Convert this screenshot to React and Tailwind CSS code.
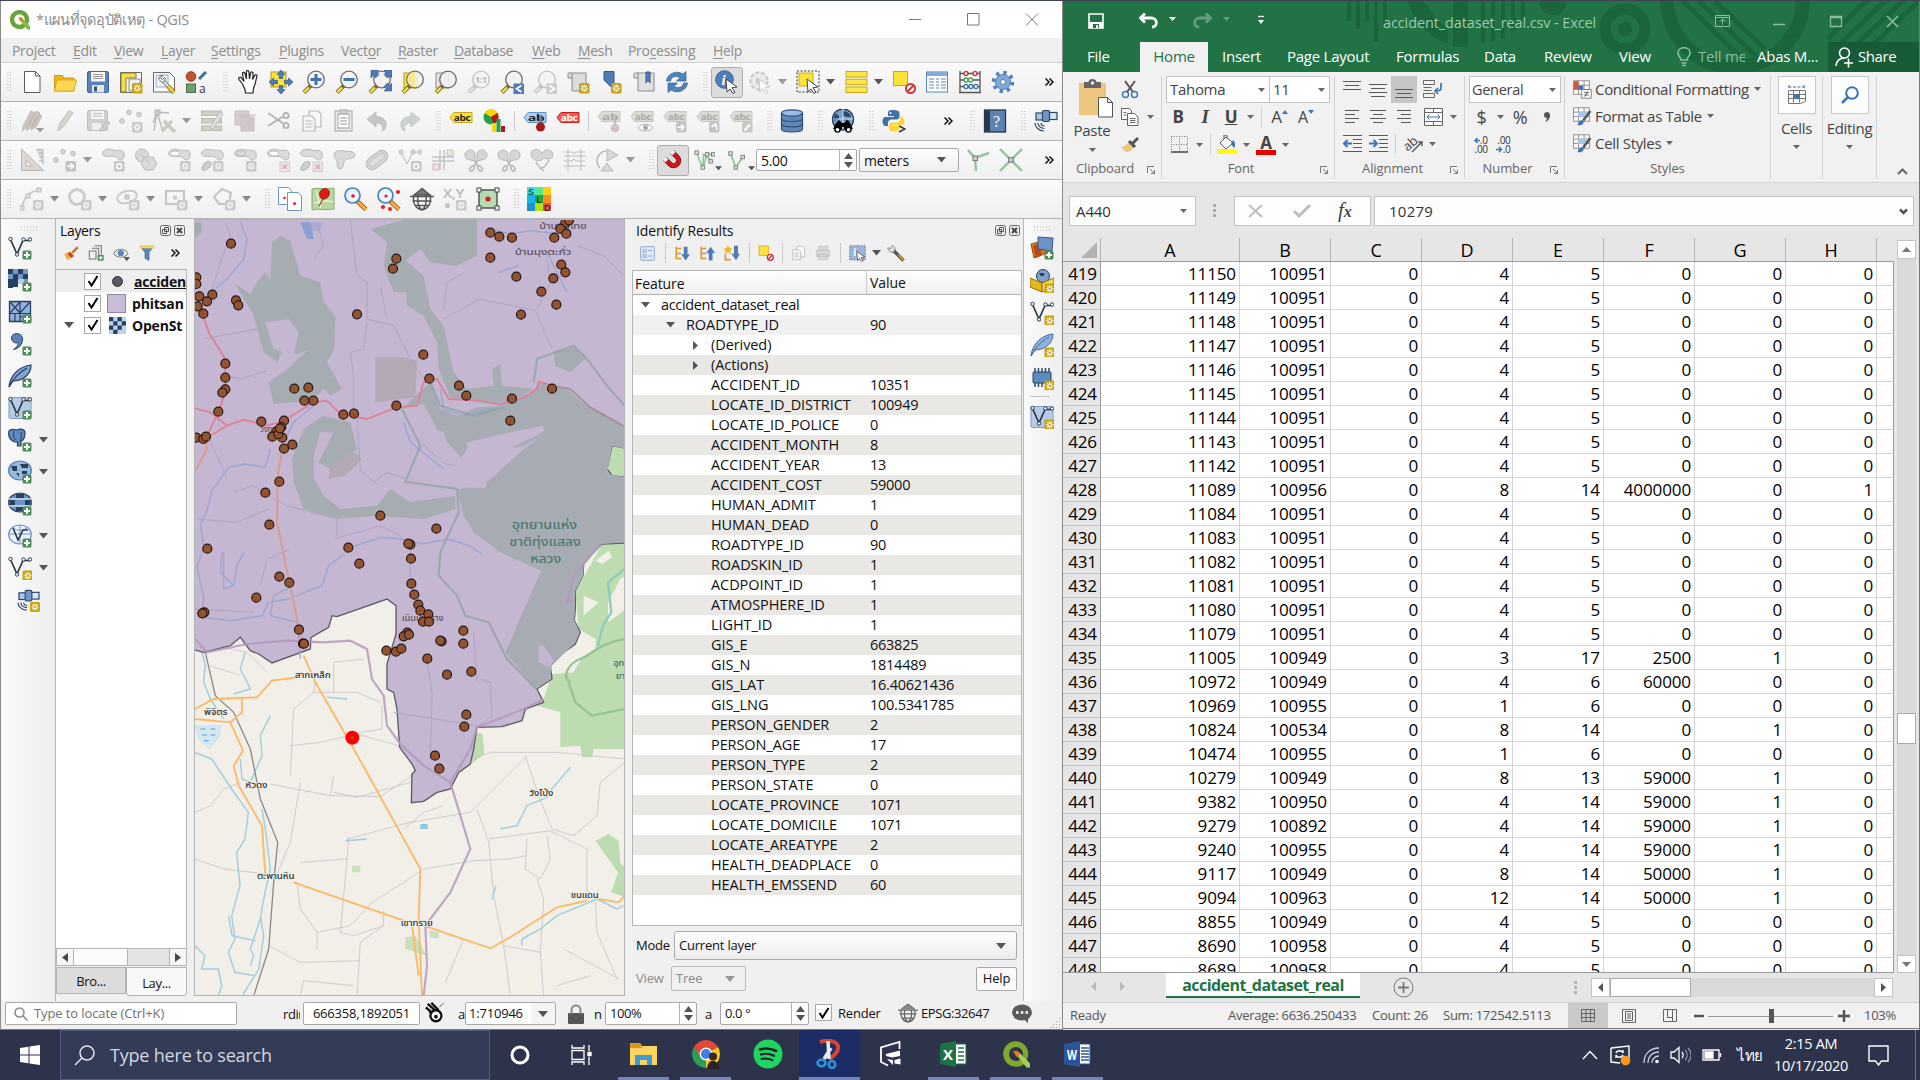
import React from "react";

/* ---------- shared drawing primitives (24x24 grid) ---------- */
const Ic = ({ children, s = 24, className = "" }) => (
  <svg width={s} height={s} viewBox="0 0 24 24" fill="none" className={"shrink-0 " + className}>{children}</svg>
);
const Star = ({ x = 13, y = 13, dim }) => (
  <g transform={`translate(${x} ${y})`}>
    <rect width="10.5" height="10.5" rx="1.5" fill={dim ? "#c9c9c5" : "#c8a40e"} />
    <path d="M5.2 1.6v7.4M1.6 5.2h7.4M2.6 2.6l5.2 5.2M7.8 2.6L2.6 7.8" stroke="#fff" strokeWidth="1.1" />
    <circle cx="5.2" cy="5.2" r="1.2" fill={dim ? "#c9c9c5" : "#c8a40e"} />
  </g>
);
const Plus = () => (
  <g transform="translate(14.5 14.5)">
    <rect width="9" height="9" rx="1.5" fill="#4d8d58" />
    <path d="M4.5 1.5v6M1.5 4.5h6" stroke="#fff" strokeWidth="2" />
  </g>
);
const Mag = ({ children, dim }) => (
  <g>
    <path d="M2 22.5l7-7" stroke={dim ? "#bdbdbd" : "#7a6a20"} strokeWidth="4" />
    <path d="M2.4 22.1l4.6-4.6" stroke={dim ? "#e2e2e2" : "#fbe04e"} strokeWidth="2.4" />
    <circle cx="14" cy="9.5" r="8.3" fill="#f2f2f2" fillOpacity=".85" stroke={dim ? "#bcbcbc" : "#6b6b6b"} strokeWidth="1.3" />
    {children}
  </g>
);
const Nodes = ({ c = "#27384d", k = "#fff" }) => (
  <g stroke={c} fill={k}>
    <path d="M2.5 3.5L9 18l6-13.5h7" fill="none" strokeWidth="1.7" />
    <circle cx="2.5" cy="3" r="1.7" /><circle cx="9" cy="18.5" r="1.7" /><circle cx="15.5" cy="3.5" r="1.7" /><circle cx="22" cy="3.5" r="1.7" />
  </g>
);
const Tag = ({ f, s, t, c = "#222" }) => (
  <g>
    <path d="M1 7.5L5 2.5h18v10H5z" fill={f} stroke={s} />
    <text x="4.8" y="10.8" fontSize="9.5" fontWeight="700" fill={c} fontFamily="Open Sans, sans-serif" textLength="16.5" lengthAdjust="spacingAndGlyphs">{t}</text>
  </g>
);
const Cur = ({ f = "#fff", s = "#444" }) => <path d="M11 9l11 8-5 .7 3 4.6-2.2 1.2-2.8-4.6-3 3.2z" fill={f} stroke={s} />;

const blob = "M1.5 6c-.5-4 6-6 11-4 4 1 9.500-1 10.500 3 .8 5-1 7-4 7-3-.5-2-3-6-3.500-5-.5-10 1-11.500-2.500z";

const G = {
  new: <path d="M4.5 1.5h11l4.5 4.5v16.5h-15.5zM15.5 1.5V6H20" fill="#fff" stroke="#5c5c5c" />,
  open: <g><path d="M1.5 21V5.5h8L11 8h10v13z" fill="#f0b51e" stroke="#cf9a1a" /><path d="M1.5 21L4 10h19.5l-3 11z" fill="#ffd84f" stroke="#d9a826" /></g>,
  save: <g><rect x="1.5" y="1.5" width="21" height="21" rx="1.5" fill="#5b82b8" stroke="#3f6699" /><rect x="5" y="2" width="14" height="9.5" fill="#f6f6f6" /><path d="M7 4.5h10M7 6.5h10M7 8.5h10" stroke="#9a9a9a" /><rect x="6" y="15" width="12" height="7.5" fill="#e6e6e6" /><rect x="8" y="16.5" width="3" height="5" fill="#34527d" /></g>,
  layout: <g><path d="M1.5 2.5h21v20h-21z" fill="#fff" stroke="#666" /><path d="M2 3h15v5H7v14H2z" fill="#f4dd52" stroke="#8a7a1c" /><path d="M10 9h11v12H10z" fill="#eee" stroke="#888" /><Star /></g>,
  layoutman: <g><path d="M1.5 2.5h16l5 5v14.5h-21z" fill="#fff" stroke="#666" /><path d="M4 5h12v12H4z" fill="#eef1f5" stroke="#9ab" /><path d="M11 11l5 5" stroke="#666" strokeWidth="3.5" /><path d="M11 11l5 5" stroke="#eee" strokeWidth="2" /><path d="M16 16l6 6.500" stroke="#8a6f1a" strokeWidth="4.500" /><path d="M16 16l6 6.500" stroke="#f3cf3f" strokeWidth="2.600" /><path d="M7 9.500l3 3c3 0 4-3 2.500-5l-2 2-1.800-1.800 2-2C8.500 5 6.500 7 7 9.500z" fill="#eee" stroke="#666" /></g>,
  style: <g><circle cx="6" cy="6.5" r="4.8" fill="#c7532d" stroke="#8f3a1d" /><path d="M14 9l7-7" stroke="#3b6ea5" strokeWidth="3" /><rect x="1.5" y="14" width="9" height="8.5" fill="#6da06f" stroke="#456f48" /><text x="14" y="23" fontSize="12" fill="#333" fontFamily="Open Sans, sans-serif">a</text></g>,
  hand: <path d="M6.500 14L3 9.500c-1-1.600 1-3 2.200-1.800L8 11.500 6.500 4c-.3-1.800 2-2.200 2.500-.500L10.500 9 10.300 2c0-1.800 2.500-1.800 2.600 0L13.500 9l1.100-6c.4-1.600 2.600-1.200 2.500.4L16.600 9.500l2-4c.8-1.400 2.700-.500 2.300 1-1.400 4-1 7.500-3.400 11.500l-.5 5H9.500l-.5-3.600z" fill="#fff" stroke="#222" strokeWidth="1.2" />,
  pan: <g><rect x="2" y="2" width="15" height="15" fill="#fbe33c" stroke="#b69c17" /><g fill="#4f7cb5" stroke="#34598c" strokeWidth=".7"><path d="M12 0l4 4.5h-2.3v4h-3.4v-4H8zM12 24l4-4.5h-2.3v-4h-3.4v4H8zM0 12l4.5-4v2.3h4v3.4h-4V16zM24 12l-4.5-4v2.3h-4v3.4h4V16z" /></g></g>,
  zin: <Mag><path d="M14 4v11M8.5 9.5h11" stroke="#3f73ad" strokeWidth="3" /></Mag>,
  zout: <Mag><path d="M8.5 9.5h11" stroke="#3f73ad" strokeWidth="3" /></Mag>,
  zfull: <g><Mag /><g fill="#4f7cb5" stroke="#34598c" strokeWidth=".6"><path d="M3 0h8L8.800 2.200 11 4.500 7.500 8 5.200 5.700 3 8zM24 0h-8l2.200 2.200L16 4.500 19.500 8l2.300-2.300L24 8zM24 21h-8l2.200-2.200L16 16.500l3.500-3.500 2.300 2.300L24 13z" /></g></g>,
  zsel: <g><rect x="3" y="3" width="13" height="15" fill="#fbe33c" stroke="#b69c17" /><Mag /><path d="M14 1.8v15.4a7.7 7.7 0 010-15.4z" fill="#f4e684" fillOpacity=".8" /></g>,
  zlay: <g><path d="M2 3h13v15H2z" fill="#e4e4e4" stroke="#8a8a8a" /><Mag /></g>,
  zone: <g opacity=".9"><Mag dim /><text x="8" y="13" fontSize="9" fontWeight="700" fill="#b5b5b5" fontFamily="Open Sans, sans-serif">1:1</text></g>,
  zlast: <g><Mag /><rect x="13.5" y="13.5" width="10.5" height="10.5" fill="#4f7cb5" /><path d="M21.5 15.5l-5 3.3 5 3.3" stroke="#fff" strokeWidth="1.8" /></g>,
  znext: <g opacity=".9"><Mag dim /><rect x="13.5" y="13.5" width="10.5" height="10.5" fill="#c9c9c9" /><path d="M16.5 15.5l5 3.3-5 3.3" stroke="#fff" strokeWidth="1.8" /></g>,
  mapnew: <g><path d="M5 3h15v18H6V8H2V4c0-1.500 2.500-1.500 3-1z" fill="#dcdcdc" stroke="#8a8a8a" /><path d="M6 8V3.500" stroke="#8a8a8a" /><Star /></g>,
  bmnew: <g><path d="M5 1.5h10V19l-4-3-6-6z" fill="#4f7cb5" stroke="#34598c" /><Star x="12" y="13" /></g>,
  bm: <g><path d="M5 3h17v18H6V8H2V4c0-1.500 2.500-1.500 3-1z" fill="#e0e0e0" stroke="#8a8a8a" /><path d="M6 8V3.500" stroke="#8a8a8a" /><path d="M14 2h4v11l-2-3-2 3z" fill="#4f7cb5" stroke="#34598c" /></g>,
  refresh: <g fill="#4f83bd" stroke="#34619a" strokeWidth=".7"><path d="M1.5 11C2 4 11-.5 18 4l3-2.5V11h-9.5L15 7.5C10.5 5 6 7 5.5 11z" /><path d="M22.5 13c-.5 7-9.5 11.5-16.5 7l-3 2.5V13h9.5L9 16.5c4.5 2.5 9 .5 9.5-3.5z" /></g>,
  ident: <g><circle cx="9.5" cy="9.5" r="8.8" fill="#4f7fba" stroke="#3a659b" /><text x="6.6" y="15" fontSize="15" fontWeight="700" fontStyle="italic" fill="#fff" fontFamily="Liberation Serif, serif">i</text><Cur /></g>,
  action: <g opacity=".7"><circle cx="11" cy="11" r="8.5" fill="#e8e8e8" stroke="#bbb" strokeWidth="2.5" strokeDasharray="4 2" /><path d="M8 7l7 4-7 4z" fill="#bbb" /><Cur s="#bbb" /></g>,
  select: <g><rect x="1" y="1" width="22" height="21" stroke="#333" strokeDasharray="2 1.6" /><rect x="3" y="3" width="14" height="13" fill="#fbe33c" stroke="#c9ae1c" /><Cur /></g>,
  selval: <g fill="#fde74a" stroke="#c9a51c"><rect x="2" y="1.5" width="21" height="5.5" /><rect x="2" y="9.2" width="21" height="5.5" /><rect x="2" y="17" width="21" height="5.5" /></g>,
  desel: <g><rect x="1.5" y="1.5" width="14" height="14" fill="#fbe33c" stroke="#c9a51c" /><circle cx="18.5" cy="18.5" r="4.500" fill="#fff" stroke="#d6313a" strokeWidth="2" /><path d="M15.500 21.500l6-6" stroke="#d6313a" strokeWidth="2" /></g>,
  table: <g><rect x="1.5" y="2" width="21" height="20" fill="#fff" stroke="#5b86ba" /><rect x="2" y="2" width="20" height="4" fill="#86abd8" /><path d="M4 9h5M4 12h5M4 15h5M4 18h5M11 9h3M11 12h3M11 15h3M11 18h3M16 9h5M16 12h5M16 15h5M16 18h5" stroke="#5b86ba" /></g>,
  abacus: <g><path d="M2 1v22M22 1v22M1 22.5h22M2 3.5h20M2 10h20M2 16.5h20" stroke="#555" strokeWidth="1.3" /><g fill="#fff" strokeWidth="1.3"><g stroke="#c9333a"><circle cx="8" cy="3.5" r="2" /><circle cx="17" cy="3.5" r="2" /></g><g stroke="#4aa355"><circle cx="8" cy="10" r="2" /><circle cx="12.5" cy="10" r="2" /></g><g stroke="#3f73ad"><circle cx="8" cy="16.5" r="2" /><circle cx="13" cy="16.5" r="2" /><circle cx="18" cy="16.5" r="2" /></g></g></g>,
  gear: <g><circle cx="12" cy="12" r="9.300" stroke="#4f83bd" strokeWidth="4" strokeDasharray="3.300 4" /><circle cx="12" cy="12" r="7.5" fill="#7fa8d8" stroke="#4f83bd" /><circle cx="12" cy="12" r="2.5" fill="#fff" stroke="#4f83bd" /></g>,

  pencils: <g fill="#ccc5be" stroke="#b5b0ab" strokeWidth=".7"><path d="M2 22l2-7L11 2l4 2-7 13zM6 22l3-7 7-13 4 2-7 13zM11 21l2-6 6-10 3 2-6 11z" /><path d="M16 19h8l-4 4.500z" fill="#999" stroke="none" /></g>,
  pencil: <path d="M5 22l1.5-7L16 1.5l4 2.5-9.5 13.5z" fill="#d7d7cf" stroke="#bcbcb8" />,
  dsave: <g><rect x="1.5" y="1.5" width="20" height="20" rx="1.5" fill="#cfcfcf" stroke="#bdbdbd" /><rect x="5" y="2" width="13" height="8" fill="#f4f4f4" /><path d="M7 4.5h9M7 7h9" stroke="#bbb" /><rect x="6" y="14" width="9" height="7" fill="#eee" /><path d="M13 22l8-10 3 2-8 8z" fill="#d6d0c8" stroke="#bbb" /></g>,
  dpts: <g><g fill="#d5d5d5" stroke="#bbb"><circle cx="3" cy="12" r="2.3" /><circle cx="10" cy="3.5" r="2.3" /><circle cx="20" cy="5.5" r="2.3" /></g><Star dim /></g>,
  dvert: <g stroke="#b8b8b8"><path d="M2 22L5 3l12 1M5 3l6 20M5 3L1 14" strokeWidth="1.3" /><rect x="3" y="1" width="5" height="5" fill="#ccc" /><path d="M10 22l10-10M12 12l11 11" stroke="#cbc9c2" strokeWidth="3.5" /></g>,
  dmulti: <g><rect x="1.5" y="2" width="20" height="4.5" fill="#cfcfc4" stroke="#bcbcb0" /><rect x="1.5" y="9.5" width="20" height="4.5" fill="#cfcfc4" stroke="#bcbcb0" /><rect x="1.5" y="17" width="20" height="4.5" fill="#cfcfc4" stroke="#bcbcb0" /><path d="M10 19L20 3l3 2-10 15z" fill="#e2e2e2" stroke="#bbb" /></g>,
  dtrash: <g fill="#d6cdcd" stroke="#c4bcbc"><path d="M2 2h14v14H2z" /><path d="M5 6h18M8 8h13v14H8zM12 10v10M15 10v10M18 10v10" fill="#d3c9c9" /></g>,
  dcut: <g stroke="#b6b2b2" strokeWidth="1.8"><path d="M2 4l16 11M2 17L18 7" /><circle cx="20" cy="6.5" r="2.6" /><circle cx="20" cy="16.5" r="2.6" /></g>,
  dcopy: <g fill="#f7f7f7" stroke="#b9b9b9" strokeWidth="1.2"><path d="M10 2h9l3 3v13H10z" /><path d="M4 7h9l3 3v12H4zM6.5 12h7M6.5 15h7M6.5 18h7" /></g>,
  dpaste: <g fill="#e9e9e9" stroke="#b9b9b9" strokeWidth="1.3"><path d="M3 2h17v20H3z" /><path d="M6 5h11v14H6zM8 9h7M8 12h7M8 15h7" fill="#fff" /><path d="M8 1h7v4H8z" fill="#ccc" /></g>,
  dundo: <path d="M2 10l9-7v4.5c8 0 11 5 10 10-.5 2.5-2 4-4 4.5 2-5-.5-8-6-8V18z" fill="#c9c5c2" stroke="#b8b4b1" strokeWidth=".7" />,
  dredo: <path d="M22 10l-9-7v4.5c-8 0-11 5-10 10 .5 2.5 2 4 4 4.5-2-5 .5-8 6-8V18z" fill="#ccd2d2" stroke="#b8bebe" strokeWidth=".7" />,
  abc: <g transform="translate(0 1)"><Tag f="#fbe33c" s="#c9a51c" t="abc" /></g>,
  diag: <g><circle cx="9" cy="8" r="7.5" fill="#1ba24b" /><path d="M9 8L2.5 4a7.5 7.5 0 0113 0z" fill="#fbd500" /><path d="M9 8l6.5-4a7.5 7.5 0 01-4 11z" fill="#b7161b" /><rect x="10" y="14" width="4" height="9" fill="#fbd500" /><rect x="14.5" y="10" width="4" height="13" fill="#1ba24b" /><rect x="19" y="17" width="4" height="6" fill="#b7161b" /></g>,
  abpin: <g><g transform="translate(0 1)"><Tag f="#a9d0f5" s="#5b93cf" t="ab" /></g><path d="M18 6v10" stroke="#777" strokeWidth="2.5" /><circle cx="17.5" cy="18" r="4.5" fill="#a51c1c" /></g>,
  abred: <g transform="translate(0 1)"><Tag f="#f8584e" s="#d11b1b" t="abc" c="#fff" /></g>,
  dab1: <g><Tag f="#dcdcd6" s="#c5c5c0" t="ab" c="#aaa" /><path d="M18 5v11" stroke="#bbb" strokeWidth="2" /><circle cx="18" cy="19" r="4.3" fill="#cfc1c1" /></g>,
  dab2: <g><Tag f="#dcdcd6" s="#c5c5c0" t="abc" c="#aaa" /><path d="M8 19c4-5 11-5 15 0-4 4-11 4-15 0z" fill="#fff" stroke="#aaa" /><circle cx="15.5" cy="18.5" r="2.5" fill="#aaa" /></g>,
  dab3: <g><Tag f="#dcdcd6" s="#c5c5c0" t="abc" c="#aaa" /><rect x="13" y="13" width="10.5" height="10.5" rx="1.5" fill="#c4c4c4" /><path d="M14.5 18.2h6M18 15.5l3 2.7-3 2.7" stroke="#fff" strokeWidth="1.6" /></g>,
  dab4: <g><Tag f="#dcdcd6" s="#c5c5c0" t="abc" c="#aaa" /><rect x="13" y="13" width="10.5" height="10.5" rx="1.5" fill="#c4c4c4" /><path d="M20.5 21c2-5-5-6-4.5-2.5M21 16l-3-1" stroke="#fff" strokeWidth="1.6" /></g>,
  dab5: <g><Tag f="#dcdcd6" s="#c5c5c0" t="abc" c="#aaa" /><rect x="13" y="13" width="10.5" height="10.5" rx="1.5" fill="#c9c9c4" /><path d="M15.5 21.5l5.5-6" stroke="#fff" strokeWidth="2.2" /></g>,
  db: <g fill="#5f87b8" stroke="#2f4f7a" strokeWidth="1.2"><path d="M1.5 4v16c0 4 21 4 21 0V4" /><ellipse cx="12" cy="4" rx="10.5" ry="3.2" fill="#9dbbe0" /><path d="M1.5 9.5c0 4 21 4 21 0M1.5 14.8c0 4 21 4 21 0" fill="none" /></g>,
  globebino: <g><circle cx="12" cy="10.5" r="10.5" fill="#7da1cd" stroke="#26425f" strokeWidth="1.3" /><path d="M4 5c4 0 5 3 3 5s-3 2-5 0M12 2c4 0 8 3 8 6-3 1-5-1-8-1z M13 11c3-1 6 0 6 2" fill="#2c4a6e" /><path d="M12 0v20M2 10h20" stroke="#dfeaf7" strokeWidth=".8" /><path d="M5 14l3-3 3 3h2l3-3 3 3 3 6h-9v-2h-2v2H2z" fill="#000" /><circle cx="6.5" cy="20.5" r="3.3" fill="#000" /><circle cx="17.5" cy="20.5" r="3.3" fill="#000" /><circle cx="6.5" cy="20.8" r="1.8" fill="#fff" /><circle cx="17.5" cy="20.8" r="1.8" fill="#fff" /></g>,
  python: <g><path d="M10.500 1c-4 0-4.5 1.5-4.5 3v3h6v1H3.500C1.5 8 .5 10 .5 12.500S2 17 3.500 17H6v-3c0-2 1.500-3.500 3.500-3.500h5c1.500 0 3-1.300 3-3V4c0-2-2-3-7-3z" fill="#3a74a8" /><path d="M12 22.500c4 0 5-1.500 5-3v-2.500h-6v-1h8.500c2 0 3-2 3-4.200 0-2.300-1.500-4-3-4H18v2.500c0 2-1.500 3.200-3.500 3.200h-5c-1.500 0-2.700 1.300-2.700 3v3c0 2 1.700 3 5.200 3z" fill="#ffd43f" /><circle cx="8.500" cy="4" r="1" fill="#fff" /><path d="M17 17l6 3-6 3" stroke="#333" strokeWidth="1.400" /></g>,
  book: <g><rect x="1.5" y="1" width="21" height="22" fill="#5b82b0" stroke="#26364d" strokeWidth="1.3" /><rect x="2" y="1.5" width="5" height="21" fill="#27374c" /><text x="10" y="18" fontSize="16" fill="#fff" fontFamily="Liberation Serif, serif">?</text></g>,
  sat: <g stroke="#2c4667" strokeWidth="1.2"><rect x="2" y="4" width="8" height="7" fill="#a9c7ea" /><rect x="14" y="3.5" width="9" height="7" fill="#d7e6f7" /><rect x="8.5" y="1.5" width="7" height="11" rx="1.5" fill="#6f96c4" /><path d="M1 14c0 4 4 8 9 8M4 14c0 3 3 5.5 6.5 5.5M7 14c0 2 1.500 3 3.500 3" /></g>,
  satstar: <g><g stroke="#2c4667" strokeWidth="1.2"><rect x="2" y="4" width="8" height="7" fill="#a9c7ea" /><rect x="14" y="3.5" width="9" height="7" fill="#d7e6f7" /><rect x="8.5" y="1.5" width="7" height="11" rx="1.5" fill="#6f96c4" /><path d="M1 14c0 4 4 8 9 8M4 14c0 3 3 5.5 6.5 5.5M7 14c0 2 1.500 3 3.500 3" /></g><Star x="13.5" y="13.5" /></g>,

  set: <g fill="#ddd8d4" stroke="#b9b5b0"><path d="M1.5 1v21.5h22zM6 12v6h6.5z" fillRule="evenodd" /><path d="M16 1.5h7v15M19 5h4M19 9h4M19 13h4" /></g>,
  mv: <g><g fill="#d5d5d5" stroke="#bbb"><circle cx="3" cy="12" r="2.3" /><circle cx="10" cy="3.5" r="2.3" /><circle cx="20" cy="5.5" r="2.3" /></g><rect x="12.5" y="13" width="10.5" height="10.5" rx="1.5" fill="#c2c2c2" /><path d="M14.5 18.2h5M17.5 15.5l3 2.7-3 2.7" stroke="#fff" strokeWidth="1.7" /></g>,
  b1: <g><path d={blob} fill="#dadada" stroke="#bababa" /><rect x="13" y="13" width="10.5" height="10.5" rx="1.5" fill="#c6c6c6" /><circle cx="18.2" cy="18.2" r="2.5" stroke="#fff" strokeWidth="1.5" /></g>,
  b2: <g fill="#dadada" stroke="#bababa"><circle cx="8" cy="7.5" r="6.5" /><path d="M11 9h8l4 6.5-4 6.5h-8l-4-6.5z" /><path d="M6 5l9 10" /></g>,
  b3: <g><path d={blob} fill="#dadada" stroke="#bababa" /><ellipse cx="8" cy="5.500" rx="4.500" ry="2.500" fill="#fff" stroke="#bababa" /><Star dim /></g>,
  b4: <g><path d={blob} fill="#dadada" stroke="#bababa" /><path d="M2 20c2-7 8-8 9-5s-4 8-9 7z" fill="#cfd0cc" stroke="#b0b0b0" /><Star dim /></g>,
  b5: <g><path d={blob} fill="#dadada" stroke="#bababa" /><ellipse cx="8" cy="5.500" rx="4.500" ry="2.500" stroke="#bababa" /><Star dim /></g>,
  b6: <g><path d={blob} fill="#dadada" stroke="#bababa" /><ellipse cx="8" cy="5.500" rx="4.500" ry="2.500" fill="#fff" stroke="#bababa" /><rect x="14" y="14" width="9.500" height="9.500" fill="#f0e3e3" stroke="#d5caca" /><path d="M16.5 16.5l4.5 4.5M21 16.5L16.5 21" stroke="#c9b5b5" strokeWidth="1.7" /></g>,
  b7: <g><path d={blob} fill="#dadada" stroke="#bababa" /><path d="M2 20c2-7 8-8 9-5s-4 8-9 7z" fill="#cfd0cc" stroke="#b0b0b0" /><rect x="14" y="14" width="9.500" height="9.500" fill="#f0e3e3" stroke="#d5caca" /><path d="M16.5 16.5l4.5 4.5M21 16.5L16.5 21" stroke="#c9b5b5" strokeWidth="1.7" /></g>,
  b8: <path d="M2 8C2 2 8 2 12 3s10-1 11 4c0 5-8 2-11 6 0 4-2 9-5 8-3-2 0-7-5-13z" fill="#d9d9d9" stroke="#b9b9b9" />,
  b9: <g transform="rotate(-38 12 12)"><rect x="0" y="6" width="24" height="12" rx="6" fill="#d6d6d2" stroke="#b9b9b5" /><rect x="3" y="9" width="18" height="6" rx="3" fill="#dedede" stroke="#c6c6c6" /></g>,
  b10: <g><g stroke="#b9b9b9" fill="#ddd"><path d="M3 4l6 12 6-12h7" fill="none" /><circle cx="3" cy="4" r="2" /><circle cx="15" cy="4" r="2" /><circle cx="22" cy="4" r="2" /></g><rect x="13" y="13" width="10.5" height="10.5" rx="1.5" fill="#c6c6c6" /><circle cx="18.2" cy="18.2" r="2.5" stroke="#fff" strokeWidth="1.5" /></g>,
  b11: <g stroke="#c4c4c4"><path d="M9 2v20M13 2v20M1 9h22M1 13h22" strokeWidth="1.5" /><rect x="2" y="16" width="6" height="6" fill="#eedede" /><rect x="16" y="2" width="6" height="6" fill="#e8e8d8" /></g>,
  b12: <g fill="#d6d6d6" stroke="#b9b9b9"><path d="M1 7c0-6 9-7 10-1l0 7-4-1c-4 0-6-2-6-5zM23 7c0-6-9-7-10-1l0 7 4-1c4 0 6-2 6-5z" /><path d="M10 12l4.500 7M14 12l-4.500 7" strokeWidth="1.5" /><ellipse cx="8" cy="20.500" rx="1.800" ry="2.800" fill="none" strokeWidth="1.500" transform="rotate(35 8 20.500)" /><ellipse cx="16" cy="20.500" rx="1.800" ry="2.800" fill="none" strokeWidth="1.500" transform="rotate(-35 16 20.500)" /></g>,
  b14: <g fill="#d6d6d6" stroke="#b9b9b9"><path d="M1 6c0-6 10-6 11 0 1-6 11-5 11 1 0 4-6 5-9 3-3 5-13 3-13-4z" /><path d="M6 14c4 8 8 8 13-2M10 20l4 3" fill="none" strokeWidth="1.5" /></g>,
  b16: <g stroke="#bdbdbd"><path d="M1 4h8l2 2 2-2h9M1 8h22M1 13h8l2-2 2 2h9M1 18h22M5 1v22M18 1v22" /></g>,
  b17: <g fill="#d8d8d8" stroke="#b9b9b9"><path d="M10 3A10 10 0 004 20" fill="none" strokeWidth="1.5" /><path d="M11 1v12l11-6zM11 15l-6 8h12z" /></g>,
  magnet: <g transform="rotate(-45 12 12)" fill="none"><path d="M6 4v9c0 8 12 8 12 0V4" stroke="#8a0d10" strokeWidth="6" /><path d="M6 5v8c0 8 12 8 12 0V5" stroke="#d0181c" strokeWidth="4.600" /><path d="M6 3.500v4M18 3.500v4" stroke="#f4f4f4" strokeWidth="5" /></g>,
  snap1: <g><path d="M3 3l7 18 5-16h7M10 21l1-16 10 8" stroke="#8fc59a" strokeWidth="1.8" /><g fill="#ddd" stroke="#7a7a7a"><rect x="1" y="1" width="4" height="4" /><rect x="13" y="3" width="4" height="4" /><rect x="20" y="3" width="4" height="4" /><rect x="8" y="18" width="4" height="4" /><rect x="17" y="11" width="4" height="4" /></g></g>,
  snap2: <g><path d="M4 4l6 16 8-12" stroke="#8fc59a" strokeWidth="2.2" /><g fill="#ddd" stroke="#7a7a7a"><rect x="2" y="2" width="4" height="4" /><rect x="8" y="18" width="4" height="4" /><rect x="16" y="6" width="4" height="4" /></g></g>,
  topo: <g><path d="M2 2l7 8 14-5M9 10l1 13" stroke="#8fc59a" strokeWidth="2.4" /><rect x="7" y="8" width="4.5" height="4.5" fill="#ccc" stroke="#777" /></g>,
  inter: <g><path d="M1 1l22 22M23 1L1 23" stroke="#8fc59a" strokeWidth="2.4" /><rect x="9.7" y="9.7" width="4.5" height="4.5" fill="#ccc" stroke="#777" /></g>,

  c1: <g><path d="M2 21C4 10 8 5 19 3" stroke="#c6c6c6" strokeWidth="1.6" /><g fill="#e3e3e3" stroke="#b9b9b9"><rect x="0" y="19" width="4" height="4" /><rect x="6" y="7" width="4" height="4" /><rect x="17" y="1" width="4" height="4" /></g><Star dim /></g>,
  c2: <g><circle cx="9" cy="10" r="7.5" stroke="#ccc" strokeWidth="3" /><Star dim /></g>,
  c3: <g><ellipse cx="11" cy="10" rx="10" ry="6" stroke="#ccc" strokeWidth="2" transform="rotate(-15 11 10)" /><circle cx="11" cy="10" r="3" fill="#ccc" /><Star dim /></g>,
  c4: <g><rect x="2" y="4" width="18" height="13" stroke="#c6c6c6" strokeWidth="2.2" /><circle cx="11" cy="10.5" r="2.2" fill="#ccc" /><Star dim /></g>,
  c5: <g><path d="M10 2l9 4-2 11H7L2 10z" stroke="#c6c6c6" strokeWidth="2.2" /><Star dim /></g>,
  pages: <g fill="#fff" stroke="#6f96bd"><path d="M.5 .500h10l3 3v14h-13z" /><path d="M9.5 5.500h10.500l3.500 3.500v14.500h-14z" /><circle cx="6.500" cy="11" r="1.3" fill="#e02020" stroke="none" /><circle cx="16.500" cy="16.500" r="1.5" fill="#e02020" stroke="none" /></g>,
  pinmap: <g><path d="M1 2c6-2 14 1 22-1v21c-8 2-14-1-22 1z" fill="#b8d8a0" stroke="#8cab74" /><path d="M3 16c4 0 8-4 19-1M5 4l5 17" stroke="#fff" /><path d="M9 5c2-5 11-4 9 2 0 3-3 5-6 5-3-1-4-4-3-7zM12 12l-4 7" fill="#e01b1b" stroke="#a80f0f" /></g>,
  zred: <g><path d="M13 14l9 8.5" stroke="#b46a15" strokeWidth="4.5" /><path d="M14 15l8 7.5" stroke="#f7ae45" strokeWidth="2.5" /><circle cx="8.5" cy="8.5" r="7.5" fill="#e8f3fd" stroke="#4c82bd" strokeWidth="1.7" /><circle cx="9" cy="9" r="1.8" fill="#e02020" /></g>,
  zred2: <g><path d="M13 14l9 8.5" stroke="#b46a15" strokeWidth="4.5" /><path d="M14 15l8 7.5" stroke="#f7ae45" strokeWidth="2.5" /><circle cx="8.5" cy="8.5" r="7.5" fill="#e8f3fd" stroke="#4c82bd" strokeWidth="1.7" /><g fill="#e02020"><circle cx="9" cy="9" r="1.6" /><circle cx="21" cy="5" r="2" /><circle cx="6" cy="20" r="2" /><circle cx="13" cy="22" r="2" /></g></g>,
  mesh: <g stroke="#555" strokeWidth="1.400"><path d="M12 1.500L4 8h16z" fill="#777" /><path d="M0 9.500h24M2.500 14h19M5 18.500h14M4 8c-2 8 2 14 8 15 6-1 10-7 8-15M8 8c-1 8 1 13 4 15 3-2 5-7 4-15" /></g>,
  xy: <g><text x="0" y="10.5" fontSize="12" fontWeight="700" fill="#c0c0c0" fontFamily="Open Sans, sans-serif" textLength="21" lengthAdjust="spacingAndGlyphs">X,Y</text><circle cx="4.5" cy="18.5" r="2.6" fill="#c6c6c6" /><Star dim /></g>,
  bbox: <g><rect x="3" y="3" width="18" height="18" fill="#b5dcae" stroke="#555" strokeWidth="1.5" /><g fill="#fff" stroke="#444"><rect x="1" y="1" width="4" height="4" /><rect x="19" y="1" width="4" height="4" /><rect x="1" y="19" width="4" height="4" /><rect x="19" y="19" width="4" height="4" /></g><circle cx="12" cy="12" r="2.6" fill="#e01b1b" /></g>,
  sld: <g><path d="M0 0h8v8H0z" fill="#35e0e6" /><path d="M8 0h8v8H8z" fill="#58e88b" /><path d="M16 0h8v8h-8z" fill="#ffd012" /><path d="M0 8h8v8H0z" fill="#12b9ef" /><path d="M8 8h8v8H8z" fill="#21ab3b" /><path d="M16 8h8v8h-8z" fill="#ff8a1e" /><path d="M0 16h8v8H0z" fill="#2391cf" /><path d="M8 16h8v8H8z" fill="#b5e01c" /><path d="M16 16h8v8h-8z" fill="#e0555c" /><g fontSize="9" fill="#111" fontFamily="Liberation Sans, sans-serif"><text x="1" y="7.5">S</text><text x="9.5" y="15.5">L</text><text x="17" y="23.5">D</text></g></g>,

  vec: <g><Nodes /><Plus /></g>,
  vecs: <g><Nodes /><Star x="14.500" y="14.500" /></g>,
  ras: <g><path d="M0 1h20v15H0z" fill="#7399cb" /><path d="M0 1h5v5H0zM10 1h5v5h-5zM5 6h5v5H5zM0 11h5v5H0zM15 6h5v5h-5z" fill="#27405f" /><path d="M5 11h5v8H5zM0 16h5v4H0z" fill="#27405f" /><path d="M10 11h6v5h-6z" fill="#b5cdea" /><Plus /></g>,
  meshl: <g><path d="M1.5 1.5h21v20h-21z" fill="#8fb1dc" stroke="#27405f" strokeWidth="1.3" /><path d="M1.5 13.5h21M12 1.5v20M2 13L12 2M2 2l10 11M12 13L22 2M7 13.5v8M12 17h10" stroke="#27405f" strokeWidth="1.2" /><Plus /></g>,
  comma: <g><path d="M3.5 6c0-6 11-6 11 1 0 6-4 9.5-9 10.5 3-2 5-4.5 4.5-7-3 1.5-6.5-1-6.5-4.5z" fill="#5b84b8" stroke="#27405f" /><Plus /></g>,
  quill: <g><path d="M1 23C2 11 12 2 23 1c0 10-9 16-18 16z" fill="#7fa4d2" stroke="#27405f" strokeWidth="1.2" /><path d="M1 23C6 13 12 8 19 4" stroke="#27405f" strokeWidth="1.2" /><Plus /></g>,
  quills: <g><path d="M1 23C2 11 12 2 23 1c0 10-9 16-18 16z" fill="#8eb2dd" stroke="#3f6a9a" /><path d="M1 23C6 13 12 8 19 4" stroke="#3f6a9a" /><Star x="14.5" y="14.5" /></g>,
  virt: <g><rect x="1" y="1.5" width="22" height="21" rx="1.5" fill="#b5cbe6" stroke="#7f9cbf" /><Nodes /><Plus /></g>,
  virts: <g><rect x="1" y="1.5" width="22" height="21" rx="1.5" fill="#b5cbe6" stroke="#7f9cbf" /><Nodes /><Star x="14.5" y="14.5" /></g>,
  pg: <g><path d="M1 3c2-3 6-1 8-1 3-1.5 8-1 8 3 0 5-2 8-4 8v5H9.5v-4H7C1 12 0 7 1 3z" fill="#5f8abf" stroke="#27405f" strokeWidth="1.2" /><path d="M6 3c-1 5 0 8 2 9M13 4c1 4 0 7-1 9" stroke="#27405f" /><Plus /></g>,
  glob1: <g><ellipse cx="12" cy="10.5" rx="11.3" ry="9.5" fill="#9bb9dd" stroke="#4f7cb5" strokeWidth="1.2" /><path d="M3 6h6v5H5zM12 4h8v4h-6zM14 11h5v3h-5zM8 13h3v4z" fill="#27405f" /><Plus /></g>,
  glob2: <g><ellipse cx="12" cy="10.5" rx="11.3" ry="9.5" fill="#6b93c5" stroke="#27405f" strokeWidth="1.2" /><path d="M1 7h22M1 14h22" stroke="#fff" strokeWidth="1.2" /><path d="M2 8h5v5H2zM17 8h5v5h-5zM8 2h8v4H8zM8 15h7v4H8z" fill="#27405f" /><Plus /></g>,
  glob3: <g><ellipse cx="12" cy="10.5" rx="11.3" ry="9.5" fill="#edf4fc" stroke="#6b93c5" strokeWidth="1.2" /><path d="M1 10h22M12 1v19M5 4c4 3 10 3 14 0" stroke="#6b93c5" /><path d="M5 4l5 12 5-10h5" stroke="#27384d" strokeWidth="1.6" /><Plus /></g>,
  cards: <g><path d="M1 8l12-3 4 12-13 5z" fill="#d87b1f" stroke="#9a4f0f" /><path d="M3 10l6-3 3 12-6 3z" fill="#b8481c" /><path d="M8 1l15 1-1 13-14-2z" fill="#6b93c5" stroke="#34598c" /><Plus /></g>,
  box: <g><circle cx="13" cy="7" r="6.5" fill="#7da1cd" stroke="#27405f" /><path d="M9 4h5v3h-3z" fill="#27405f" /><path d="M0 9l12 5v9L0 18z" fill="#e5b818" stroke="#8c6f0b" /><path d="M12 14l12-5v9l-12 5z" fill="#f8da45" stroke="#8c6f0b" /><Star x="14.5" y="14.5" /></g>,
  chip: <g><rect x="3" y="6" width="18" height="11" rx="1" fill="#5f8abf" stroke="#27405f" /><path d="M5 2v4M8.5 2v4M12 2v4M15.5 2v4M19 2v4M5 17v4M8.5 17v4M12 17v4" stroke="#27405f" strokeWidth="1.4" /><Star x="14.5" y="14.5" /></g>,
};
const I = ({ n, s, className }) => <Ic s={s} className={className}>{G[n]}</Ic>;

/* ---------- QGIS toolbar pieces ---------- */
const Slot = ({ n }) => <div className="flex w-[33px] shrink-0 justify-center"><I n={n} /></div>;
const Grip = () => (
  <div className="flex w-[18px] shrink-0 justify-center pl-1.5">
    <svg width="5" height="20" className="shrink-0"><path d="M1 0v20M4 0v20" stroke="#b5b5b5" strokeDasharray="1 2" /></svg>
  </div>
);
const Tri = ({ c = "#555", w = 10 }) => (
  <svg width={w} height={w / 2 + 1} viewBox="0 0 10 6" className="shrink-0"><path d="M0 0h10L5 6z" fill={c} /></svg>
);
const DD = ({ c }) => <div className="flex w-[15px] shrink-0 justify-center pr-[2px]"><Tri c={c} w={9} /></div>;
const VSep = ({ className = "w-2" }) => <div className={"flex h-5 shrink-0 justify-center " + className}><div className="w-px bg-[#c9c9c9]" /></div>;
const More = () => (
  <svg width="9" height="8" className="shrink-0" fill="none" stroke="#111" strokeWidth="1.500"><path d="M.5 .500L4 4 .5 7.500M4.500 .500L8 4 4.500 7.500" /></svg>
);
const Bar = ({ children }) => (
  <div className="flex h-[39px] shrink-0 items-center border-b border-[#b4b4b4] bg-gradient-to-b from-[#fafafa] to-[#efefef]">
    <div className="w-[14px] shrink-0 pl-[5px]"><svg width="5" height="20"><path d="M2 0v20M4.5 0v20" stroke="#b5b5b5" strokeDasharray="1 2" /></svg></div>
    {children}
  </div>
);
const Spin = () => (
  <div className="flex h-full w-[17px] shrink-0 flex-col items-center justify-center gap-[3px] border-l border-[#b4b4b4]">
    <svg width="9" height="6"><path d="M0 6h9L4.5 0z" fill="#555" /></svg>
    <svg width="9" height="6"><path d="M0 0h9L4.5 6z" fill="#555" /></svg>
  </div>
);

const MENU = [
  ["Pro", "j", "ect", "w-[61px]"], ["", "E", "dit", "w-[41px]"], ["", "V", "iew", "w-[47px]"], ["", "L", "ayer", "w-[50px]"],
  ["", "S", "ettings", "w-[68px]"], ["", "P", "lugins", "w-[62px]"], ["Vect", "o", "r", "w-[57px]"], ["", "R", "aster", "w-[56px]"],
  ["", "D", "atabase", "w-[78px]"], ["", "W", "eb", "w-[46px]"], ["", "M", "esh", "w-[50px]"], ["Pro", "c", "essing", "w-[85px]"], ["", "H", "elp", "w-[50px]"],
];

/* ---------- map ---------- */
const DOTS = [[122,84],[18,185],[18,205],[27,242],[66,237],[50,257],[22,272],[39,294],[137,254],[144,269],[618,129],[608,159],[500,296],[900,51],[927,63],[965,66],[900,126],[978,183],[1113,147],[1125,170],[1089,188],[1053,228],[1098,267],[992,297],[1125,22],[1110,39],[1128,54],[1092,66],[1136,14],[699,417],[717,489],[806,510],[828,540],[965,549],[960,615],[1085,519],[618,570],[459,597],[491,594],[312,519],[354,516],[342,555],[369,555],[105,444],[105,486],[105,521],[96,531],[84,588],[213,618],[281,615],[273,634],[258,648],[246,663],[276,666],[264,655],[269,638],[306,687],[281,699],[18,666],[39,670],[47,663],[267,798],[225,831],[237,927],[51,999],[267,1083],[297,1101],[198,1146],[42,1190],[36,1193],[570,900],[738,939],[474,996],[507,1044],[660,987],[654,984],[662,1029],[663,1104],[672,1137],[684,1167],[690,1185],[714,1196],[326,1242],[338,1284],[341,1284],[698,1218],[716,1218],[651,1251],[640,1262],[656,1257],[588,1305],[617,1308],[633,1299],[711,1329],[754,1277],[750,1275],[819,1245],[819,1284],[770,1377],[843,1368],[828,1497],[822,1533],[734,1620],[747,1659]];
const PURPLE = "M0 0H1320V700L1265 690 1250 760 1265 780 1303 785V982L1235 985 1210 1010 1180 1045 1178 1080 1155 1125 1155 1180 1152 1215 1170 1250 1155 1285 1120 1310 1080 1350 1085 1390 1040 1420 1060 1460 1005 1480 995 1515 935 1533 860 1535 850 1600 840 1645 805 1670 780 1720 740 1730 700 1757 663 1761 665 1675 675 1665 665 1645 628 1595 620 1480 610 1430 590 1420 590 1345 617 1255 617 1170 590 1150 440 1203 425 1200 415 1235 362 1265 360 1300 245 1342 205 1315 180 1305 150 1265 120 1290 40 1310 0 1300z";

const MapCanvas = () => (
  <svg width="431" height="776" viewBox="14 13 1293 2328" className="block">
    <rect x="0" y="0" width="1400" height="2400" fill="#f2efe9" />
    <g fill="#bddcb0">
      <path d="M1265 690L1307 700V785L1250 775zM1235 985L1307 980V1600L1210 1600 1205 1625 1175 1625 1170 1590 1110 1595V1490L1040 1470 1060 1450 1085 1375 1150 1370 1190 1300 1215 1305V1270L1165 1240 1155 1130z" />
      <path d="M857 1550l20 5 5 60-40 30zM1215 1875l40-20 30 20 5 70 17 10v90l-44-15 20-60z" /><path d="M645 2165l30-5 35 60-65-20zM715 2145l30 5v20l-25-5zM485 1950h25v20h-25z" opacity=".8" />
    </g>
    <g fill="#f2efe9"><path d="M1160 1250l55 20v30l-30 20-50 30-50 20-2-20 47-50zM1180 1140l45 20-45 40zM1290 1090l17-10v100l-54 40v-60zM1215 1035l40-30 10 20-30 20z" /></g>
    <g fill="none" stroke="#c9c3c9" strokeWidth="2.5">
      <path d="M14 1790L60 1770 100 1720 150 1700M14 1930L100 1960 230 1975M300 1680L310 1480 370 1430 375 1390M370 1430L500 1430 570 1460M430 1730L500 1745 660 1700M240 1705L420 1740 570 1743 650 1690 780 1590M470 1870L660 1820 840 1790 1010 1620M300 1590L390 1580 500 1555 625 1590M330 1940L470 1930 475 1865M250 2000L300 1880 330 1700M320 2000L330 2080 380 2150 480 2130 545 2060 640 2000 700 1960 850 1935 960 1930 1005 1920M470 1930L450 2150 490 2160 580 2130V2085M235 2190L330 2240 510 2235M500 2341L510 2180 580 2130M330 2341L340 2295 490 2310M380 2150V2200M860 1780L895 1880 910 2040 940 2190 1050 2210 1060 2341M895 1870L1080 1845 1190 1900V2040M1005 1620L1045 1740 1085 1840 1150 1860 1220 1800 1230 1700 1303 1640M1010 1870L1005 1960 1050 1990 1080 1930 1070 1860M1050 2210L1060 2050 1040 1990M1120 2200L1250 2270 1285 2290M1215 2060L1220 2150 1280 2290M765 2300L820 2170M940 2190L960 2341M1100 2310L1200 2280M430 1430L430 1340 520 1330M510 1550L575 1540 575 1470M800 1650L900 1610 1100 1610 1303 1630M70 1290l100 20 60 60M60 1350l90 30M420 1740l10-60M640 1840l60-50 60-20M660 1700l20-60" />
    </g>
    <g fill="none" stroke="#9fd0de" strokeWidth="4.5" strokeLinejoin="round">
      <path d="M35 1310l10 40-5 50 20 50 40 60M165 1310l-15 50 30 60-50 15M14 1610l50 20 60 90 50 70-10 80-25 40 10 100-25 90 10 70-20 40 20 60 60 10M215 1780l10 60 15 120-20 90-10 60-30 90 10 20-10 30M240 1500l-30 60 5 60-35 80-25-10-5-60M14 2190l30 30-10 40 50 0 10 50-10 31M155 2341l50-80 15-100-10-60M1140 1655l-60 70-10 20-60 25-30 60-50 10M1300 2070l-20 10-60-30-120 50-50 40-55 30v20M410 1445l60 5M465 1875l65-5M905 2050l12-40M115 2100l10 60 70 15" />
      <path d="M1303 1060l-50 40 10 90-25 40-15 60" stroke="#88cfc0" strokeWidth="7" />
    </g>
    <path d="M14 1530h78l-5 30-30 40-30-30z" fill="#d5e8f2" stroke="#a4cde0" />
    <path d="M30 1540h15M60 1540h15M35 1558h15M60 1558h15M40 1575h15" stroke="#4d9fe0" strokeWidth="3" />
    <path d="M690 1825h22v15h-22z" fill="#8ec8dc" />
    <path d="M45 1310L75 1440 130 1490 180 1600 210 1750 262 1880 250 2000 235 2200 190 2341" fill="none" stroke="#8c8c8c" strokeWidth="4" />
    <path d="M340 1320L375 1400 485 1590 690 1960 685 2110 695 2341M14 1480L70 1450 200 1445 245 1395 320 1385M14 1510L120 1520 155 1490V1450M120 1520L158 1605 130 1650 145 1710 215 1830 225 1980M310 2000L640 2115M700 2130L900 2198 960 2165 1100 2075 1190 2055M1225 2050L1285 2060 1303 2040M665 2130L685 2280" fill="none" stroke="#fbb964" strokeWidth="5.5" />
    <path d="M1140 1400c-30-20 0-60 30-70s60-50 133-60M1135 1400l20 60 50 40 98-20" fill="none" stroke="#93c58c" strokeWidth="7" />

    <path d={PURPLE} fill="#c5b6d2" stroke="#5f5a66" strokeWidth="4" />
    <g fill="#a7acb4">
      <path d="M635 580L700 565 740 640 690 650 700 690 760 745 800 752 830 700 860 672 900 700 950 700 1000 690 1000 690 1052 660 1052 660 1000 700 890 800 800 822 820 900 850 950 930 1010 1052 1065 945 1310 1038 1420 1080 1390 1083 1350 1125 1310 1155 1280 1168 1250 1152 1215 1155 1125 1178 1080 1180 1045 1235 985 1307 980V785L1250 775 1265 690 1307 700V635L1190 570 1130 520 1045 500 1030 525 940 570 860 575 800 600 750 580 720 500z" />
    </g>
    <g fill="#a6adb2">
      <path d="M225 170L240 195 245 80 270 60 300 75 330 180 390 200 400 260 435 300 432 400 410 440 455 520 420 540 400 520 360 555 250 565 235 500 290 460 350 405 320 415 280 400 260 440 220 410 190 300 135 205 180 235 200 200z" />
      <path d="M540 40L640 13H860V120L800 150 720 140 690 100 650 130 650 230 610 230 580 150 590 80zM640 130L700 180 720 280 760 330 790 470 830 520 910 510 905 460 930 445 935 510 1030 520 940 570 860 560 780 545 745 460 740 380 700 300 650 270z" />
      <path d="M340 640L400 600 480 620 500 700 420 760 385 740 430 650 390 650 370 720 370 790 400 840 450 880 560 870 600 820 660 860 795 840 795 880 700 910 560 900 440 910 340 880 310 800 305 730z" />
      <path d="M1090 410l60-15 40 30-50 45-45-20zM14 20h20v30l-20 20z" />
    </g>
    <path d="M555 425l85 0 40 10-5 110-120 15z" fill="#b3a9b5" /><path d="M420 750l70-40 25 20-50 50-50 10z" fill="#b3a9b5" />
    <g fill="#c5b6d2"><path d="M690 620l70 30 10 30 55 60-10 15-60-15-60-60zM830 680l130-30 100-20v18l-100 50-5 34-55-28-70 0zM225 320l70-10 30 40-15 70-60-20zM650 795l40-100 100 70 100 30-5 22-85-2zM1045 1290l15 0 30 45-15 20-30-15z" /></g>
    <g fill="none" stroke="#a9a0be" strokeWidth="2.5">
      <path d="M105 20L120 60 90 140 60 240M380 20L400 90 370 130M480 13L500 180 530 200 530 310 610 330 660 430 700 490M530 320L520 400 480 410 490 480 490 590M760 280L770 200 815 175M760 310L870 250 1035 285 1085 400M1040 280L1080 200 1070 130M40 370L200 340M105 480L150 490 230 465M50 665L80 720 110 790M130 830L190 810 250 850 290 870 440 910 440 960M235 880L140 920 20 910M210 1110L230 1030 300 1000M700 1200L660 1100 660 1000 630 960 570 930 430 970M870 1390L900 1400 905 1500 860 1535M710 1330L725 1430 720 1630M850 1250L860 1400M1160 90l80 30 60 60M570 210l20 100M550 800l40-30 60 20M14 1180l180 10M560 805l-50-40-10-160M610 1490l250 40" />
    </g>
    <g fill="none" stroke="#9aa6d2" strokeWidth="4" strokeLinejoin="round">
      <path d="M150 20l20 50-10 60-50 60-25 20-25 30M900 40l60 15 60-10 90 10M225 755l-60-10-50 10-50 70-15 60-20 40 10 70-20 60 20 90-5 60 90 10 90-15 20-40 60-10 100-40 20-60 80-60 80-25 60 5 60 15 80-15 60 20 40 25M240 700l-15 55M370 570l-60 50-30 60M95 1010l-5 60 40 40-30 10v-110M240 1200l10-60 60-30M750 520l10 60 60 20 90-20M640 620l20 60 100 80M1070 110l60 120M925 170l60-20M130 1110l10-60 20-40M240 1200l80 20 10 110" />
    </g>
    <g fill="none" stroke="#8aa39e" strokeWidth="6" opacity=".75">
      <path d="M635 580L690 690 645 798 800 820 805 890 750 1010 745 1080 800 1140 825 1200 895 1220 950 1330 1038 1420M1030 500L1040 430 1150 390 1190 430 1250 510 1303 570M720 500L750 570 850 600 940 575" />
    </g>
    <path d="M340 20l60 0-10 25-50 5z" fill="#9aa6d2" opacity=".6" /><path d="M330 20h30l10 50-20 0z" fill="#8d9ed4" />
    <g fill="none" stroke="#dd8199" strokeWidth="5.5"><path d="M39 300L55 350 105 430 105 530 84 590 50 660M14 578L60 590 110 630M14 670L70 655 110 630 160 612 230 630 281 615 369 560 410 555 450 595 530 610 618 575 680 570 700 500 740 490 775 550 870 555 930 567 1000 545 1040 520 1045 497 1085 510" /></g>
    <path d="M1085 510L1140 520 1200 575 1303 633" fill="none" stroke="#a58b98" strokeWidth="5" />
    <path d="M275 705L262 780 260 920 297 1100 338 1290M14 768L50 700 45 665" fill="none" stroke="#dd9a88" strokeWidth="5.5" />
    <path d="M14 1270L50 1310 170 1285 290 1275 400 1280 480 1275 530 1300 545 1390 580 1440 590 1530 630 1585 700 1650 780 1700 840 1600 860 1535 1000 1480 1060 1450M780 1700L840 1900 780 2030 705 2130 710 2250 700 2341M1150 1155L1130 1160 1150 1080 1230 985" fill="none" stroke="#b399bd" strokeWidth="6.5" opacity=".85" />
    <g fontFamily="Noto Sans Thai, Loma, Garuda, sans-serif" textAnchor="middle" fontWeight="500">
      <g fill="#5d5468" fontSize="27"><text x="1118" y="39" textLength="142" lengthAdjust="spacingAndGlyphs">บ้านมุงไทย</text><text x="1058" y="117" textLength="170" lengthAdjust="spacingAndGlyphs">บ้านมุงตะกั่ว</text><text x="240" y="650" textLength="60" lengthAdjust="spacingAndGlyphs">วังทอง</text><text x="697" y="1215" textLength="125" lengthAdjust="spacingAndGlyphs">เนินมะปราง</text></g>
      <g fill="#4c7a6c" fontSize="36"><text x="1062" y="940" textLength="196" lengthAdjust="spacingAndGlyphs">อุทยานแห่ง</text><text x="1064" y="992" textLength="214" lengthAdjust="spacingAndGlyphs">ชาติทุ่งแสลง</text><text x="1066" y="1042" textLength="92" lengthAdjust="spacingAndGlyphs">หลวง</text></g>
      <g fill="#333" fontSize="28" stroke="#f2efe9" strokeWidth="5" paintOrder="stroke"><text x="367" y="1386" textLength="108" lengthAdjust="spacingAndGlyphs">สากเหล็ก</text><text x="76" y="1498" textLength="70" lengthAdjust="spacingAndGlyphs">พิจิตร</text><text x="198" y="1716" textLength="66" lengthAdjust="spacingAndGlyphs">หัวดง</text><text x="1053" y="1742" textLength="72" lengthAdjust="spacingAndGlyphs">วังโป่ง</text><text x="256" y="1991" textLength="112" lengthAdjust="spacingAndGlyphs">ตะพานหิน</text><text x="679" y="2130" textLength="96" lengthAdjust="spacingAndGlyphs">เขาทราย</text><text x="1183" y="2048" textLength="84" lengthAdjust="spacingAndGlyphs">ชนแดน</text></g>
      <g fill="#4c6a5c" fontSize="28"><text x="1285" y="1350">อุท</text><text x="1290" y="1390">ยา</text></g>
    </g>
    <g fill="#935330" stroke="#231610" strokeWidth="3.5">{DOTS.map(([x, y], i) => <circle key={i} cx={x} cy={y} r="13.500" />)}</g>
    <circle cx="486" cy="1566" r="21" fill="#fe0000" /><circle cx="486" cy="1566" r="5" fill="#c63a22" />
  </svg>
);

const FEATS = [["ACCIDENT_ID","10351"],["LOCATE_ID_DISTRICT","100949"],["LOCATE_ID_POLICE","0"],["ACCIDENT_MONTH","8"],["ACCIDENT_YEAR","13"],["ACCIDENT_COST","59000"],["HUMAN_ADMIT","1"],["HUMAN_DEAD","0"],["ROADTYPE_ID","90"],["ROADSKIN_ID","1"],["ACDPOINT_ID","1"],["ATMOSPHERE_ID","1"],["LIGHT_ID","1"],["GIS_E","663825"],["GIS_N","1814489"],["GIS_LAT","16.40621436"],["GIS_LNG","100.5341785"],["PERSON_GENDER","2"],["PERSON_AGE","17"],["PERSON_TYPE","2"],["PERSON_STATE","0"],["LOCATE_PROVINCE","1071"],["LOCATE_DOMICILE","1071"],["LOCATE_AREATYPE","2"],["HEALTH_DEADPLACE","0"],["HEALTH_EMSSEND","60"]];

const DockBtns = () => (
  <div className="flex gap-[3px]">
    <svg width="11" height="11"><rect x=".5" y=".5" width="10" height="10" rx="2" fill="none" stroke="#666" /><path d="M4.5 2.5h4v4h-4zM2.5 4.5h4v4h-4z" fill="#eee" stroke="#555" /></svg>
    <svg width="11" height="11"><rect x=".5" y=".5" width="10" height="10" rx="2" fill="none" stroke="#666" /><path d="M3 3l5 5M8 3L3 8" stroke="#444" strokeWidth="2" /></svg>
  </div>
);
const Check = () => (
  <div className="flex size-[17px] shrink-0 items-center justify-center border border-[#a9a9a9] bg-white">
    <svg width="12" height="12"><path d="M1.5 6l3 4.5L10.5 1" fill="none" stroke="#000" strokeWidth="2" /></svg>
  </div>
);
const Feat = ({ i, children, v, className }) => (
  <div className={"flex h-5 shrink-0 items-center " + (i === 1 ? "bg-[#f0f0f0]" : i % 2 ? "bg-[#e9e8e4]" : "bg-white")}>
    <div className={"flex h-5 w-[237px] shrink-0 items-center whitespace-nowrap " + className}>{children}</div><span className="tracking-[-0.25px]">{v}</span>
  </div>
);

const Qgis = () => (
  <div className="flex w-[1063px] shrink-0 flex-col border-r border-l border-[#8a8a8a] bg-[#f0f0f0] font-['Open_Sans','Noto_Sans',sans-serif] text-[14px] tracking-[-0.35px] text-[#111]">
    <div className="flex h-[37px] shrink-0 items-center bg-white pl-[8px] text-[#8c8c8c]">
      <svg width="21" height="21" viewBox="0 0 24 24"><path d="M12 1a11 11 0 107 19.5l3 3h2.5v-3l-3-3A11 11 0 0012 1zm0 5a6 6 0 11-.01 0z" fill="#67a33a" fillRule="evenodd" /><path d="M11 11h5l8 9v3.5h-3z" fill="#8dbb3a" /><path d="M10.5 9.5h4l2 3-3 1.5z" fill="#ee7913" /></svg>
      <span className="ml-[6px] w-[790px] text-[14.500px] tracking-[-0.3px]">*แผนที่จุดอุบัติเหตุ - QGIS</span>
      <svg width="140" height="14" className="ml-[83px]" stroke="#777" fill="none"><path d="M0 6.5h12M58.5 .5h11.5v11.5h-11.5zM117 .5l12 12M129 .5l-12 12" /></svg>
    </div>
    <div className="flex h-[25px] shrink-0 items-center border-b border-[#d0d0d0] bg-[#efefef] pl-[11px] text-[14px] tracking-[-0.3px] text-[#8d8d8d]">
      {MENU.map(([a, u, b, w]) => <span key={a + u} className={"shrink-0 whitespace-nowrap " + w}>{a}<u className="underline-offset-2">{u}</u>{b}</span>)}
    </div>
    <Bar>
      {["new","open","save","layout","layoutman","style"].map(n => <Slot key={n} n={n} />)}<Grip />
      {["hand","pan","zin","zout","zfull","zsel","zlay","zone","zlast","znext","mapnew","bmnew","bm","refresh"].map(n => <Slot key={n} n={n} />)}<Grip />
      <div className="flex h-[31px] w-[32px] shrink-0 items-center justify-center rounded-[3px] border border-[#adadad] bg-[#dcdcdc]"><I n="ident" /></div>
      <Slot n="action" /><DD c="#999" /><Slot n="select" /><DD /><Slot n="selval" /><DD /><Slot n="desel" /><Slot n="table" /><Slot n="abacus" /><Slot n="gear" />
      <div className="w-[26px]" /><More />
    </Bar>
    <Bar>
      {["pencils","pencil","dsave","dpts","dvert"].map(n => <Slot key={n} n={n} />)}<DD c="#999" />
      {["dmulti","dtrash","dcut","dcopy","dpaste","dundo","dredo"].map(n => <Slot key={n} n={n} />)}<Grip />
      <Slot n="abc" /><Slot n="diag" /><VSep /><Slot n="abpin" /><Slot n="abred" /><VSep />
      {["dab1","dab2","dab3","dab4","dab5"].map(n => <Slot key={n} n={n} />)}<Grip /><Slot n="db" /><Grip /><Slot n="globebino" /><Grip /><Slot n="python" />
      <div className="w-[34px]" /><More /><div className="w-[7px]" /><Grip /><Slot n="book" /><Grip /><Slot n="sat" />
    </Bar>
    <Bar>
      <Slot n="set" /><Slot n="mv" /><DD c="#999" />
      {["b1","b2","b3","b4","b5","b6","b7","b8","b9","b10","b11","b12"].map(n => <Slot key={n} n={n} />)}<Slot n="b12" /><Slot n="b14" /><Slot n="b16" /><Slot n="b17" /><DD c="#999" /><Grip />
      <div className="flex h-[31px] w-[32px] shrink-0 items-center justify-center rounded-[3px] border border-[#adadad] bg-[#dcdcdc]"><I n="magnet" s={20} /></div>
      <div className="flex w-[33px] shrink-0 items-end pl-[5px]"><I n="snap1" s={21} /><Tri w={7} /></div>
      <div className="flex w-[34px] shrink-0 items-end pl-[5px]"><I n="snap2" s={21} /><Tri w={7} /></div>
      <div className="flex h-[22px] w-[101px] shrink-0 items-center rounded-[2px] border border-[#a9a9a9] bg-white pl-1"><span className="flex-1 tracking-[-0.3px]">5.00</span><Spin /></div>
      <div className="ml-[2px] flex h-[24px] w-[100px] shrink-0 items-center rounded-[2px] border border-[#a9a9a9] bg-gradient-to-b from-[#fefefe] to-[#eee] px-1"><span className="flex-1 tracking-[-0.2px]">meters</span><div className="pr-2"><Tri w={9} /></div></div>
      <div className="w-[2px]" /><Slot n="topo" /><Slot n="inter" /><div className="w-[18px]" /><More />
    </Bar>
    <Bar>
      <Slot n="c1" /><DD c="#888" /><Slot n="c2" /><DD c="#888" /><Slot n="c3" /><DD c="#888" /><Slot n="c4" /><DD c="#888" /><Slot n="c5" /><DD c="#888" /><Grip />
      {["pages","pinmap","zred","zred2","mesh","xy","bbox"].map(n => <Slot key={n} n={n} />)}<Grip /><Slot n="sld" />
    </Bar>

    <div className="flex h-[782px] shrink-0">
      <div className="flex w-[54px] shrink-0 flex-col bg-gradient-to-r from-[#fafafa] to-[#eee] pt-[7px]">
        <svg width="18" height="5" className="ml-[20px]"><path d="M0 1h18M0 4h18" stroke="#b5b5b5" strokeDasharray="1 2" /></svg>
        <div className="flex flex-col pt-[1px]">
          {["vec","ras","meshl","comma","quill","virt","pg","glob1","glob2","glob3","vecs"].map((n, i) => (
            <div key={n} className="flex h-8 items-center pl-[7px]"><I n={n} />{[6, 7, 9, 10].includes(i) && <div className="pl-[7px]"><Tri w={9} /></div>}</div>
          ))}
          <div className="flex h-8 items-center pl-[16px]"><I n="satstar" s={23} /></div>
        </div>
      </div>
      <div className="flex w-[132px] shrink-0 flex-col border-l border-[#b4b4b4]">
        <div className="flex h-[22px] shrink-0 items-center justify-between pr-[2px] pl-[4px] text-[14px]"><span>Layers</span><DockBtns /></div>
        <div className="flex h-[28px] shrink-0 items-center gap-[9px] pb-[4px] pl-[8px]">
          <Ic s={15}><path d="M1 12c4 0 6-3 9-3l5 6c-3 1-4 5-9 8-1-2-5-6-5-11z" fill="#f0b030" /><path d="M9 9l7 7-4 3-6-6z" fill="#d33a25" /><path d="M13 11L22 2" stroke="#c47b22" strokeWidth="4" /></Ic>
          <Ic s={16}><path d="M2 9h10v12H2zM6 5h10v13M10 1h10v13" stroke="#777" strokeWidth="1.6" fill="#eee" /><Plus /></Ic>
          <Ic s={17}><path d="M1 12C6 4 16 4 21 12 16 19 6 19 1 12z" fill="#fff" stroke="#888" strokeWidth="1.5" /><circle cx="11" cy="11.5" r="4.5" fill="#5b86ba" /><path d="M15 17h9l-4.5 6z" fill="#555" /></Ic>
          <Ic s={16}><path d="M2 2h20l-7 9v12l-6-3V11z" fill="#5b86ba" stroke="#34598c" /><path d="M2 1h20v4H2z" fill="#f6d84a" /></Ic>
          <span className="pl-[7px]"><More /></span>
        </div>
        <div className="flex min-h-0 flex-1 flex-col overflow-hidden border-t border-r border-[#b4b4b4] bg-white text-[14px] font-bold tracking-[-0.2px] whitespace-nowrap">
          <div className="flex h-[22px] shrink-0 items-center bg-[#eee] pl-[28px]"><Check /><div className="mr-[9px] ml-[11px] size-[11px] shrink-0 rounded-full border border-[#333] bg-[#5d5666]" /><span className="ml-[2px] underline">accident</span></div>
          <div className="flex h-[22px] shrink-0 items-center pl-[28px]"><Check /><div className="ml-[6px] size-[19px] shrink-0 border border-[#9484a5] bg-[#c9bbda]" /><span className="ml-[6px]">phitsan</span></div>
          <div className="flex h-[22px] shrink-0 items-center pl-[8px]"><Tri w={10} /><div className="w-[10px] shrink-0" /><Check /><Ic s={17} className="ml-[8px]"><path d="M0 0h24v24H0z" fill="#bcd3ef" /><path d="M0 0h6v6H0zM12 0h6v6h-6zM6 6h6v6H6zM18 6h6v6h-6zM0 12h6v6H0zM12 12h6v6h-6zM6 18h6v6H6z" fill="#27405f" /></Ic><span className="ml-[6px]">OpenSt</span></div>
        </div>
        <div className="flex h-[18px] w-[131px] shrink-0 border border-[#b4b4b4] bg-[#e4e4e4]">
          <div className="flex w-[17px] items-center justify-center border-r border-[#b4b4b4] bg-[#f6f6f6]"><svg width="6" height="9"><path d="M6 0v9L0 4.5z" fill="#444" /></svg></div>
          <div className="w-[54px] border-r border-[#b4b4b4] bg-[#fbfbfb]" /><div className="flex-1" />
          <div className="flex w-[17px] items-center justify-center border-l border-[#b4b4b4] bg-[#f6f6f6]"><svg width="6" height="9"><path d="M0 0v9l6-4.5z" fill="#444" /></svg></div>
        </div>
        <div className="flex h-[35px] shrink-0 items-start pt-[1px] text-[13px]">
          <div className="flex h-[27px] w-[70px] items-center justify-center border border-[#b4b4b4] bg-[#dcdcdc] pt-[3px]">Bro...</div>
          <div className="flex h-[29px] w-[61px] items-center justify-center rounded-b-[3px] border border-[#b4b4b4] bg-[#f8f8f8] pt-[4px]">Lay...</div>
        </div>
      </div>
      <div className="w-[7px] shrink-0" />
      <div className="h-[777px] w-[431px] shrink-0 overflow-hidden border border-[#b4b4b4]"><MapCanvas /></div>
      <div className="flex w-[398px] shrink-0 flex-col pl-[7px]">
        <div className="flex h-[22px] shrink-0 items-center justify-between pr-[3px] pl-[4px] text-[14px] tracking-[-0.15px]"><span>Identify Results</span><DockBtns /></div>
        <div className="flex h-[29px] shrink-0 items-center pb-[5px] pl-[8px]">
          <Ic s={15}><rect x="1" y="1" width="22" height="22" rx="2" fill="#dfe9f5" stroke="#8da9cb" strokeWidth="1.5" /><path d="M5 6h5v4H5zM5 14h5v4H5zM13 7h7M13 16h7" stroke="#8da9cb" strokeWidth="1.5" /></Ic>
          <VSep className="w-[20px]" />
          <Ic s={15}><path d="M2 1v20M2 4h8M2 12h8M2 20h8" stroke="#e0942c" strokeWidth="2.5" /><path d="M14 1h6v12h4l-7 10-7-10h4z" fill="#4f7cb5" /></Ic>
          <Ic s={15} className="ml-[10px]"><path d="M2 1v20M2 4h8M2 12h8M2 20h8" stroke="#e0942c" strokeWidth="2.5" /><path d="M14 23h6V11h4L17 1l-7 10h4z" fill="#4f7cb5" /></Ic>
          <Ic s={16} className="ml-[9px]"><path d="M6 0l2 5 5 0-4 4 2 5-5-3-5 3 2-5-4-4h5z" fill="#f3b41d" /><path d="M2 14v8h8" stroke="#e0942c" strokeWidth="2.5" /><path d="M15 1h6v12h3l-6 10-7-10h4z" fill="#4f7cb5" /></Ic>
          <VSep className="w-[18px]" />
          <I n="desel" s={16} /><VSep className="w-[16px]" />
          <I n="dcopy" s={16} />
          <Ic s={16} className="ml-[9px]"><path d="M5 2h14v6H5zM2 8h20v9H2zM5 14h14v8H5z" fill="#d8d8d8" stroke="#bdbdbd" /></Ic>
          <VSep className="w-[18px]" />
          <Ic s={17}><rect x="1" y="1" width="22" height="20" fill="#9cb6d8" stroke="#445" strokeDasharray="2 2" /><text x="6" y="15" fontSize="14" fontWeight="700" fill="#fff">i</text><Cur /></Ic>
          <div className="px-[6px]"><Tri w={9} /></div>
          <Ic s={18}><path d="M7 7l15 15" stroke="#555" strokeWidth="4.500" /><path d="M15 14.500l7 7" stroke="#c99a2a" strokeWidth="2.500" /><path d="M1 5l4 1 2-4c4 1 5 5 2 8s-7 0-8-5z" fill="#ddd" stroke="#777" /></Ic>
        </div>
        <div className="flex h-[656px] w-[390px] shrink-0 flex-col border border-[#b4b4b4] bg-white text-[14.500px] tracking-[-0.08px]">
          <div className="flex h-[24px] shrink-0 items-center border-b border-[#b4b4b4] bg-gradient-to-b from-white to-[#efefef] text-[14px]"><div className="h-full w-[234px] border-r border-[#c9c9c9] pt-[2px] pl-[2px]">Feature</div><div className="pl-[3px]">Value</div></div>
          <Feat i={0} className="pl-[8px]"><Tri w={9} /><span className="pl-[11px] tracking-[-0.35px]">accident_dataset_real</span></Feat>
          <Feat i={1} v="90" className="pl-[33px]"><Tri w={9} /><span className="pl-[11px]">ROADTYPE_ID</span></Feat>
          {["(Derived)", "(Actions)"].map((t, k) => <Feat key={t} i={k + 2} className="pl-[60px]"><svg width="5" height="9"><path d="M0 0v9l5-4.5z" fill="#555" /></svg><span className="pl-[13px]">{t}</span></Feat>)}
          {FEATS.map(([a, v], k) => <Feat key={a} i={k + 4} v={v} className="pl-[78px]">{a}</Feat>)}
        </div>
        <div className="mt-[5px] flex h-[29px] shrink-0 items-center pl-[4px] text-[13px] tracking-[-0.2px]"><span className="w-[38px] pt-px">Mode</span><div className="flex h-[29px] w-[343px] items-center rounded-[3px] border border-[#a9a9a9] bg-gradient-to-b from-[#fefefe] to-[#ececec] pt-px pl-1"><span className="flex-1">Current layer</span><div className="pr-[10px]"><Tri w={10} /></div></div></div>
        <div className="mt-[6px] flex h-[25px] shrink-0 items-center pl-[4px] text-[13px] tracking-[-0.2px]"><span className="w-[35px] pt-px text-[#8a8a8a]">View</span><div className="flex h-[25px] w-[75px] items-center rounded-[2px] border border-[#b9b9b9] pt-px pl-1 text-[#8a8a8a]"><span className="flex-1">Tree</span><div className="pr-[10px]"><Tri w={10} c="#9a9a9a" /></div></div><div className="ml-[230px] flex h-[24px] w-[41px] items-center justify-center rounded-[2px] border border-[#a9a9a9] bg-[#fafafa] pt-px">Help</div></div>
      </div>
      <div className="flex flex-1 flex-col border-l border-[#b9b9b9] bg-gradient-to-r from-[#fafafa] to-[#eee] pt-[7px]">
        <svg width="18" height="5" className="ml-[10px]"><path d="M0 1h18M0 4h18" stroke="#b5b5b5" strokeDasharray="1 2" /></svg>
        <div className="flex flex-col pt-[1px] pl-[6px]">
          {["cards","box","vecs","quills","chip"].map(n => <div key={n} className="flex h-[32.4px] items-center"><I n={n} /></div>)}
          <div className="my-[2px] h-px w-[20px] bg-[#c4c4c4]" />
          <div className="flex h-[36px] items-center"><I n="virts" /></div>
        </div>
      </div>
    </div>

    <div className="flex h-[29px] shrink-0 items-start border-b border-[#777] pt-[1px] text-[13px] tracking-[-0.4px]">
      <div className="ml-[4px] flex h-[23px] w-[232px] shrink-0 items-center rounded-[2px] border border-[#a9a9a9] bg-white pl-2 tracking-[-0.1px] text-[#707070]"><svg width="14" height="14" fill="none" stroke="#888" strokeWidth="1.5" className="mr-[6px]"><circle cx="5.5" cy="5.5" r="4.5" /><path d="M9 9l4.5 4.5" /></svg>Type to locate (Ctrl+K)</div>
      <span className="ml-[46px] w-[17px] shrink-0 overflow-hidden pt-[3px]">rdin</span>
      <div className="ml-[3px] flex h-[23px] w-[117px] shrink-0 items-center justify-center rounded-[2px] border border-[#a9a9a9] bg-white tracking-[-0.2px]">666358,1892051</div>
      <Ic s={22} className="ml-[4px]"><path d="M4 2l9 8M2 6l10 8M8 1l8 8M6 10l6 9" stroke="#111" strokeWidth="2.5" /><circle cx="13" cy="15" r="6" fill="#fff" stroke="#111" strokeWidth="2.5" /><circle cx="13" cy="16" r="2" fill="#111" /><path d="M17 5l5-4" stroke="#111" strokeDasharray="2 1" /></Ic>
      <span className="ml-[12px] w-[7px] overflow-hidden pt-[3px]">a</span>
      <div className="flex h-[23px] w-[91px] shrink-0 items-center rounded-[2px] border border-[#a9a9a9] bg-white pl-[3px] tracking-[-0.2px]"><span className="flex-1">1:710946</span><div className="flex h-full w-[24px] items-center justify-center bg-[#f4f4f4]"><Tri w={10} /></div></div>
      <svg width="18" height="20" viewBox="0 0 18 20" className="mt-[2px] ml-[11px] shrink-0"><rect x="1" y="9" width="16" height="11" rx="1" fill="#555" /><path d="M4.5 10V6c0-6 9-6 9 0v4" fill="none" stroke="#8a8a8a" strokeWidth="2" /></svg>
      <span className="ml-[9px] w-[11px] shrink-0 pt-[3px]">n</span>
      <div className="flex h-[23px] w-[92px] shrink-0 items-center rounded-[2px] border border-[#a9a9a9] bg-white pl-1"><span className="flex-1">100%</span><Spin /></div>
      <span className="ml-[8px] w-[15px] shrink-0 pt-[3px]">a</span>
      <div className="flex h-[23px] w-[89px] shrink-0 items-center rounded-[2px] border border-[#a9a9a9] bg-white pl-1"><span className="flex-1">0.0 °</span><Spin /></div>
      <div className="ml-[6px] pt-[2px]"><Check /></div>
      <span className="ml-[6px] w-[60px] shrink-0 pt-[2px] tracking-[-0.2px]">Render</span>
      <Ic s={20} className="mt-px"><path d="M12 1l-8 6h16z" fill="#888" stroke="#666" /><path d="M0 8.5h24M2 13h20M5 18h14M4 8c-2 8 2 14 8 15 6-1 10-7 8-15M8 8c-1 8 1 13 4 15 3-2 5-7 4-15" stroke="#666" strokeWidth="1.500" /></Ic>
      <span className="ml-[3px] w-[91px] shrink-0 pt-[2px]">EPSG:32647</span>
      <svg width="20" height="20" viewBox="0 0 20 20" className="mt-[2px] shrink-0"><ellipse cx="10" cy="8.5" rx="10" ry="8" fill="#5a5a5a" /><path d="M12 15l4 4.5V14z" fill="#5a5a5a" /><path d="M4 8.5h2.5M8.8 8.5h2.5M13.5 8.500H16" stroke="#fff" strokeWidth="2.5" /></svg>
      <svg width="10" height="10" className="mt-[16px] ml-[19px] shrink-0" fill="#a8a8a8"><path d="M8 0h1v1H8zM5 3h1v1H5zM8 3h1v1H8zM2 6h1v1H2zM5 6h1v1H5zM8 6h1v1H8zM0 9h1v1H0zM2 9h1v1H2zM5 9h1v1H5zM8 9h1v1H8z" /></svg>
    </div>
  </div>
);

/* ---------- Excel ---------- */
const ROWS = [
  [419,11150,100951,0,4,5,0,0,0],[420,11149,100951,0,4,5,0,0,0],[421,11148,100951,0,4,5,0,0,0],[422,11147,100951,0,4,5,0,0,0],[423,11146,100951,0,4,5,0,0,0],[424,11145,100951,0,4,5,0,0,0],[425,11144,100951,0,4,5,0,0,0],[426,11143,100951,0,4,5,0,0,0],[427,11142,100951,0,4,5,0,0,0],
  [428,11089,100956,0,8,14,4000000,0,1],[429,11084,100951,0,4,5,0,0,0],[430,11083,100951,0,4,5,0,0,0],[431,11082,100951,0,4,5,0,0,0],[432,11081,100951,0,4,5,0,0,0],[433,11080,100951,0,4,5,0,0,0],[434,11079,100951,0,4,5,0,0,0],
  [435,11005,100949,0,3,17,2500,1,0],[436,10972,100949,0,4,6,60000,0,0],[437,10969,100955,0,1,6,0,0,0],[438,10824,100534,0,8,14,0,1,0],[439,10474,100955,0,1,6,0,0,0],[440,10279,100949,0,8,13,59000,1,0],[441,9382,100950,0,4,14,59000,1,0],[442,9279,100892,0,4,14,59000,1,0],[443,9240,100955,0,4,14,59000,1,0],[444,9117,100949,0,8,14,50000,1,0],[445,9094,100963,0,12,14,50000,1,0],[446,8855,100949,0,4,5,0,0,0],[447,8690,100958,0,4,5,0,0,0],[448,8689,100958,0,4,5,0,0,0],
];
const GRID = "grid grid-cols-[38px_139px_91px_91px_91px_91px_91px_91px_91px_17px]";
const XT = () => <svg width="7" height="4" className="shrink-0"><path d="M0 0h7L3.5 4z" fill="#666" /></svg>;
const C = ({ className = "w-[26px]", children }) => <div className={"flex h-[27px] shrink-0 items-center justify-center " + className}>{children}</div>;
const Al = ({ w, top = 5, cls }) => (
  <svg width="18" height="18" stroke="#5a5a5a" className={cls}>{w.map(([a, b], i) => <path key={i} d={`M${a} ${top + i * 4 - 2.5}H${b}`} />)}</svg>
);
const Launch = () => <svg width="8" height="8" fill="none" stroke="#777"><path d="M.5 7V.5H7M3 3l4 4M7.5 4v3.5H4" /></svg>;
const Group = ({ className, label, launch, children }) => (
  <div className={"my-[4px] flex h-[103px] shrink-0 flex-col border-r border-[#d2d2d2] " + className}>
    <div className="h-[83px] shrink-0">{children}</div>
    <div className="flex h-[20px] items-center text-[13px] tracking-[-0.1px] text-[#666]"><span className="flex-1 text-center">{label}</span>{launch && <div className="pt-[2px] pr-[6px]"><Launch /></div>}</div>
  </div>
);
const Brush = () => <g><path d="M22 5l-9 12" stroke="#555" strokeWidth="3" /><path d="M6 23c0-4 3-7 7-6 2 4-3 7-7 6z" fill="#3d73b5" /></g>;
const Indent = ({ d }) => <svg width="19" height="17" fill="none"><path d="M0 .5h19M10 4.5h9M10 8.5h9M10 12.5h9M0 16.5h19" stroke="#5a5a5a" /><path d={d} stroke="#3d73b5" strokeWidth="2" /></svg>;

const Ribbon = () => (
  <div className="flex h-[111px] shrink-0 border-b border-[#d2d2d2] bg-[#f1f1f1] text-[15px] tracking-[-0.3px] text-[#444]">
    <Group className="w-[99px]" label="Clipboard" launch>
      <div className="flex">
        <div className="flex w-[58px] flex-col items-center pt-[3px]">
          <svg width="36" height="40" className="ml-[8px]"><rect x="1" y="4" width="27" height="32" fill="#edc57e" /><path d="M6 3h4.5c0-4 8-4 8 0H23v6H6z" fill="#666" /><circle cx="14.5" cy="4" r="1.7" fill="#eee" /><path d="M20.5 18.5h9l5 5v14.5h-14zM29.5 18.5v5h5" fill="#fff" stroke="#555" /></svg>
          <span className="mt-[1px] leading-[20px]">Paste</span><div className="pt-[8px]"><XT /></div>
        </div>
        <div className="flex w-[39px] flex-col">
          <div className="flex h-[27px] items-center"><svg width="18" height="19" fill="none"><path d="M4 1l8 11M14 1L6 12" stroke="#555" strokeWidth="2" /><circle cx="4.5" cy="14.5" r="3" stroke="#3d73b5" strokeWidth="1.4" /><circle cx="13.5" cy="14.5" r="3" stroke="#3d73b5" strokeWidth="1.4" /></svg></div>
          <div className="flex h-[28px] items-center gap-[8px]"><svg width="18" height="18" fill="#fff" stroke="#666"><path d="M.5 .5h8l2 2v9H.5z" /><path d="M6.5 5.5h7l3.5 3.5v8.5H6.5zM9 10.5h5.5M9 12.5h5.5M9 14.5h5.5M2.5 4.5h3M2.5 7h3" /></svg><XT /></div>
          <div className="flex h-[27px] items-center"><svg width="18" height="17"><path d="M0 11c3 0 6-3 8-5l5 5c-2 3-4 5-8 5z" fill="#edc57e" /><path d="M8 5l6 6M11 8l6-6" stroke="#555" strokeWidth="3" /></svg></div>
        </div>
      </div>
    </Group>
    <Group className="w-[173px]" label="Font" launch>
      <div className="ml-[4px] flex h-[27px]"><div className="flex w-[104px] items-center justify-between border border-[#c3c3c3] bg-white pr-[4px] pl-[3px]">Tahoma<XT /></div><div className="-ml-px flex w-[61px] items-center justify-between border border-[#c3c3c3] bg-white pr-[4px] pl-[3px]">11<XT /></div></div>
      <div className="ml-[3px] flex h-[28px] items-center text-[17px]">
        <C><b>B</b></C><C className="w-[28px]"><i className="font-['Liberation_Serif',serif] text-[19px] font-bold">I</i></C><C className="w-[24px]"><b className="underline">U</b></C><C className="w-[14px]"><XT /></C><C className="w-[9px]"><div className="h-[21px] w-px bg-[#cfcfcf]" /></C>
        <C className="w-[27px]">A<svg width="6" height="14"><path d="M0 4l3-4 3 4z" fill="#3d73b5" /></svg></C><C className="w-[26px] text-[16px]">A<svg width="6" height="14"><path d="M0 0h6L3 4z" fill="#3d73b5" /></svg></C>
      </div>
      <div className="ml-[4px] flex h-[27px] items-center">
        <C><svg width="17" height="17" fill="none" stroke="#777"><path d="M.5 .5h16v15M.5 .5v15M8.5 0v16M0 8.5h16" strokeDasharray="1 1.5" /><path d="M0 16h17" stroke="#444" strokeWidth="1.5" /></svg></C><C className="w-[14px]"><XT /></C><C className="w-[9px]"><div className="h-[21px] w-px bg-[#cfcfcf]" /></C>
        <C className="w-[24px]"><svg width="20" height="19"><path d="M3 8l6-6 7 6-7 6z" fill="#f8f8f8" stroke="#555" /><path d="M7 4V0h3v3" fill="none" stroke="#555" /><path d="M16 5c2 2 3 5 1 8l-3-4z" fill="#3d73b5" /><path d="M0 14h20v5H0z" fill="#ff0" /></svg></C><C className="w-[14px]"><XT /></C>
        <C className="w-[26px]"><div className="flex flex-col items-center"><b className="text-[17px] leading-[15px]">A</b><div className="h-[5px] w-[20px] bg-[#e80000]" /></div></C><C className="w-[12px]"><XT /></C>
      </div>
    </Group>
    <Group className="w-[130px]" label="Alignment" launch>
      <div className="ml-[4px] flex">
        <C><Al w={[[0, 18], [2, 16], [0, 18]]} top={3} /></C><C><Al w={[[0, 18], [2, 16], [0, 18], [2, 16]]} top={6} /></C><C className="w-[26px] bg-[#c6c6c6]"><Al w={[[0, 18], [2, 16], [0, 18]]} top={11} /></C>
        <C className="w-[32px]"><svg width="20" height="19" fill="none" stroke="#666"><path d="M.5 .5h11v4H.5zM.5 7.5h8M.5 10.5h8M.5 13.5h11v4H.5z" /><path d="M18 3v5c0 2-2 3-5 3M15 8l-3 3 3 3" stroke="#3d73b5" strokeWidth="1.7" /></svg></C>
      </div>
      <div className="ml-[4px] flex">
        <C><Al w={[[2, 16], [2, 12], [2, 16], [2, 12]]} /></C><C><Al w={[[1, 17], [4, 14], [1, 17], [4, 14]]} /></C><C><Al w={[[2, 16], [6, 16], [2, 16], [6, 16]]} /></C>
        <C className="w-[32px]"><svg width="19" height="18" fill="#fff" stroke="#666"><path d="M.5 .5h18v17H.5zM.5 4.5h18M.5 13.5h18M9.5 .5v4M9.5 13.5v4" /><path d="M3 9h13M5.5 6.5L3 9l2.5 2.5M13.5 6.5L16 9l-2.5 2.5" stroke="#3d73b5" fill="none" /></svg></C><C className="w-[8px]"><XT /></C>
      </div>
      <div className="ml-[4px] flex">
        <C><Indent d="M1 8.5h8M4.5 5L1 8.5 4.5 12" /></C><C><Indent d="M0 8.5h8M4.5 5L8 8.5 4.5 12" /></C><C className="w-[9px]"><div className="h-[21px] w-px bg-[#cfcfcf]" /></C>
        <C className="w-[28px]"><svg width="20" height="19"><text x="0" y="14" fontSize="13" fill="#444" transform="rotate(-40 7 11)" fontFamily="Open Sans, sans-serif">ab</text><path d="M8 18L18 8M14 8h4v4" fill="none" stroke="#555" strokeWidth="1.4" /></svg></C><C className="w-[9px]"><XT /></C>
      </div>
    </Group>
    <Group className="w-[100px]" label="Number" launch>
      <div className="ml-[4px] flex h-[27px] w-[92px] items-center justify-between border border-[#c3c3c3] bg-white pr-[4px] pl-[2px] text-[14.500px]">General<XT /></div>
      <div className="ml-[4px] flex h-[28px] items-center text-[18px]"><C className="w-[25px]">$</C><C className="w-[12px]"><XT /></C><C className="w-[28px]">%</C><C className="w-[24px]"><svg width="7" height="10"><path d="M1 3c0-4 6-4 6 0 0 4-2 6-5 7 1-1.500 2-3 2-4C2 6 1 5 1 3z" fill="#555" /></svg></C></div>
      <div className="ml-[4px] flex h-[27px] items-center gap-[8px] pl-[5px] text-[10px] leading-[9px] text-[#333]">
        <div className="flex flex-col items-end"><span className="flex items-center"><svg width="6" height="7"><path d="M6 3.5H1M3.5 1L1 3.5 3.5 6" stroke="#3d73b5" strokeWidth="1.5" fill="none" /></svg>.0</span><span>.00</span></div>
        <div className="flex flex-col items-end"><span>.00</span><span className="flex items-center"><svg width="7" height="7"><path d="M0 3.5h5M3 1l2.5 2.5L3 6" stroke="#3d73b5" strokeWidth="1.5" fill="none" /></svg>.0</span></div>
      </div>
    </Group>
    <Group className="w-[206px]" label="Styles">
      {[["Conditional Formatting", 0], ["Format as Table", 1], ["Cell Styles", 2]].map(([t, k]) => (
        <div key={t} className="flex h-[27px] items-center pb-px pl-[8px] text-[15px] tracking-[-0.32px]">
          <svg width="19" height="19" viewBox="0 0 24 24" className="mr-[3px] shrink-0"><path d="M.7 1h20v17H.7zM.7 6.5h20M.7 12h20M7 1v17M14 1v17" fill="#fff" stroke="#777" />{k === 0 ? <g><path d="M1 1.5h6v10H1z" fill="#d0583a" /><path d="M7 7h6v5H7z" fill="#3d73b5" /><path d="M11 12h12v11H11z" fill="#fff" stroke="#666" /><path d="M14 16h6M14 19h6M19 14l-4 7" stroke="#444" /></g> : <g><path d="M6 6h12v7H6z" fill="#a9c6e6" /><Brush /></g>}</svg>
          <span className="mr-[5px] whitespace-nowrap">{t}</span><XT />
        </div>
      ))}
    </Group>
    <Group className="w-[52px]" label="">
      <div className="flex flex-col items-center"><div className="flex size-[38px] items-center justify-center border border-[#c9c9c9] bg-[#fdfdfd]"><svg width="18" height="20" fill="#fff" stroke="#777"><path d="M.5 5.5h17v11l-5 2H.5zM.5 9.5h17M.5 13.5h17M5.5 5.5v12M11.5 5.5v12" /><path d="M6 9.5h6v4H6z" fill="#3d73b5" stroke="none" /><path d="M.5 2h16M1 0v4M16 0v4" stroke="#3d73b5" strokeDasharray="3 1.5" /></svg></div><span className="mt-[3px] leading-[22px]">Cells</span><div className="pt-[6px]"><XT /></div></div>
    </Group>
    <Group className="w-[54px]" label="">
      <div className="flex flex-col items-center"><div className="flex size-[38px] items-center justify-center border border-[#c9c9c9] bg-[#fdfdfd]"><svg width="18" height="18" fill="none" stroke="#3d73b5" strokeWidth="2"><circle cx="11" cy="7" r="5.8" /><path d="M7 11l-6 6" strokeWidth="2.5" /></svg></div><span className="mt-[3px] leading-[22px]">Editing</span><div className="pt-[6px]"><XT /></div></div>
    </Group>
    <div className="flex flex-1 items-end justify-center pb-[7px] pl-[8px]"><svg width="11" height="7"><path d="M1 6l4.5-4.5L10 6" fill="none" stroke="#666" strokeWidth="2" /></svg></div>
  </div>
);

const TABS = [["Insert", "w-[65px]"], ["Page Layout", "w-[109px]"], ["Formulas", "w-[88px]"], ["Data", "w-[60px]"], ["Review", "w-[75px]"], ["View", "w-[57px]"]];

const Excel = () => (
  <div className="flex w-[857px] shrink-0 flex-col border-r border-[#777] bg-[#e6e6e6] font-['Open_Sans','Noto_Sans',sans-serif]">
    <div className="relative flex h-[71px] shrink-0 flex-col overflow-hidden bg-[#217346] text-white">
      <svg width="856" height="71" className="absolute inset-0" fill="none" stroke="#1a653b">
        <path d="M286 0v20M295 0v28M304 0v20M313 0v40M322 0v25M420 0v42M430 0v40M440 0v38M450 0v30M460 0v20" strokeWidth="4" />
        <path d="M345 0h15l25 30v12c-15-3-35-20-40-42z" fill="#1a653b" stroke="none" /><path d="M390 0h15v46h-15z" fill="#1a653b" stroke="none" /><circle cx="490" cy="0" r="14" fill="#1a653b" stroke="none" />
        <circle cx="562" cy="28" r="20" strokeWidth="11" /><circle cx="562" cy="28" r="7" fill="#1a653b" stroke="none" />
        <circle cx="672" cy="-2" r="68" strokeWidth="14" /><path d="M620 0l65 64M636 0l60 58M652 0l50 48" strokeWidth="5" /><path d="M765 38l40-40M778 42l50-48M795 42l48-45M812 42l46-44" strokeWidth="5" />
      </svg>
      <div className="relative flex h-[40px] shrink-0 items-center pl-[25px]">
        <svg width="16" height="16" className="shrink-0"><path d="M1 1h14v14H1z" fill="none" stroke="#fff" strokeWidth="1.6" /><path d="M1 9h14v6H1z" fill="#fff" /><path d="M5 11h6v4H5z" fill="#217346" /><path d="M8 12h2v3H8z" fill="#fff" /></svg>
        <svg width="135" height="18" className="ml-[35px] shrink-0" fill="none" stroke="#fff"><path d="M2 6h10c7 0 7 9 1 9M6 1.5L1.5 6 6 10.5" strokeWidth="2.8" /><path d="M30 5h7l-3.5 4z" fill="#fff" stroke="none" /><g opacity=".3"><path d="M71 6H61c-7 0-7 9-1 9M67 1.5L71.5 6 67 10.5" strokeWidth="2.8" /><path d="M84 5h7l-3.5 4z" fill="#fff" stroke="none" /></g><path d="M119 4.500h6" strokeWidth="1.3" /><path d="M119 8h6l-3 4z" fill="#fff" stroke="none" /></svg>
        <span className="ml-[109px] w-[328px] shrink-0 pt-[4px] text-[14.500px] tracking-[-0.12px] text-[#9cc9ae]">accident_dataset_real.csv - Excel</span>
        <svg width="190" height="16" fill="none" stroke="#8cbd9f" className="shrink-0"><path d="M4.5 2.5h14v11h-14zM4.5 4.5h14M11.5 12V6M8.5 9l3-3 3 3" /><path d="M62 11.5h12" strokeWidth="1.5" /><path d="M119.5 3.5h11v10h-11zM119 4.5h12" strokeWidth="1.3" /><path d="M176 3l11 11M187 3l-11 11" strokeWidth="1.5" /></svg>
      </div>
      <div className="relative flex h-[31px] shrink-0 items-center text-[15px] tracking-[-0.25px]">
        <span className="w-[77px] pl-[24px]">File</span>
        <div className="flex h-[30px] w-[68px] items-center justify-center self-end bg-[#f1f1f1] pb-px text-[#217346]">Home</div>
        <div className="w-[14px]" />
        {TABS.map(([t, w]) => <span key={t} className={"shrink-0 pb-px whitespace-nowrap " + w}>{t}</span>)}
        <svg width="15" height="20" className="ml-[1px] shrink-0" fill="none" stroke="#8cbd9f" strokeWidth="1.6"><path d="M4 13c0-3-3-3-3-7 0-7 12-7 12 0 0 4-3 4-3 7zM4.5 16h5M5 18.5h4" /></svg>
        <span className="ml-[6px] w-[47px] overflow-hidden pb-px whitespace-nowrap text-[#8cbd9f]">Tell me</span>
        <span className="ml-[12px] w-[71px] pb-px whitespace-nowrap">Abas M...</span>
        <div className="flex h-[30px] flex-1 items-center self-end bg-[#185c37] pl-[7px]"><svg width="20" height="21" fill="none" stroke="#fff" strokeWidth="1.6"><circle cx="9.5" cy="6" r="5" /><path d="M1 19c0-5 4-8 8-8M9 16h9M13.5 11.5v9" /></svg><span className="ml-[3px] pb-px tracking-[-0.4px]">Share</span></div>
      </div>
    </div>
    <Ribbon />
    <div className="flex h-[55px] shrink-0 items-start pt-[13px] pl-[6px] text-[15px] text-[#333]">
      <div className="flex h-[30px] w-[127px] items-center justify-between border border-[#c3c3c3] bg-[#fdfdfd] pr-[8px] pl-[6px] tracking-[-0.1px]">A440<XT /></div>
      <svg width="4" height="14" className="mx-[17px] mt-[8px]"><path d="M0 0h3v3H0zM0 5h3v3H0zM0 10h3v3H0z" fill="#aaa" /></svg>
      <div className="flex h-[30px] w-[137px] items-center border border-[#c3c3c3] bg-[#fdfdfd] pl-[13px]"><svg width="70" height="16" fill="none" stroke="#bdbdbd" strokeWidth="2"><path d="M1 2l13 12M14 2L1 14" /><path d="M46 8l5 5L62 2" strokeWidth="3" /></svg><span className="ml-[20px] font-['Liberation_Serif',serif] text-[21px] text-[#444] italic">f<span className="text-[16px] font-bold">x</span></span></div>
      <div className="ml-[3px] flex h-[30px] w-[540px] items-center justify-between border border-[#c3c3c3] bg-[#fdfdfd] pr-[5px] pl-[14px] tracking-[0.250px]">10279<svg width="9" height="7"><path d="M1 1.5l3.5 3.5L8 1.500" fill="none" stroke="#555" strokeWidth="2.5" /></svg></div>
    </div>
    <div className="flex h-[735px] shrink-0">
      <div className="w-[831px] shrink-0 overflow-hidden border-b border-[#999] text-[17px] tracking-[-0.1px] text-black">
        <div className={GRID + " h-[24px] border-b border-[#9b9b9b] bg-[#e6e6e6]"}>
          <div className="flex items-end justify-end border-r border-[#b4b4b4] pr-[3px] pb-[3px]"><svg width="16" height="16"><path d="M16 0v16H0z" fill="#b2b2b2" /></svg></div>
          {"ABCDEFGH".split("").map(c => <div key={c} className="flex items-center justify-center border-r border-[#b4b4b4] text-[18px] leading-none">{c}</div>)}<div />
        </div>
        {ROWS.map(r => (
          <div key={r[0]} className={GRID + " h-[24px] leading-[24px]"}>
            {r.map((v, i) => i === 0
              ? <div key={i} className="h-[24px] border-r border-b border-[#9b9b9b] border-b-[#c4c4c4] bg-[#e6e6e6] pr-[3px] text-right">{v}</div>
              : <div key={i} className="h-[24px] border-r border-b border-[#d4d4d4] bg-white pr-[3px] text-right">{v}</div>)}
            <div className="h-[24px] border-r border-b border-[#d4d4d4] border-r-[#9b9b9b] bg-white" />
          </div>
        ))}
      </div>
      <div className="ml-[3px] flex w-[19px] flex-col bg-[#dadada]">
        <div className="h-[2px] bg-[#e6e6e6]" />
        <div className="flex h-[19px] items-center justify-center border border-[#c3c3c3] bg-white"><svg width="9" height="5"><path d="M0 5h9L4.5 0z" fill="#777" /></svg></div>
        <div className="h-[454px]" /><div className="h-[31px] border border-[#ababab] bg-white" /><div className="flex-1" />
        <div className="flex h-[18px] items-center justify-center border border-[#c3c3c3] bg-white"><svg width="9" height="5"><path d="M0 0h9L4.5 5z" fill="#777" /></svg></div>
      </div>
    </div>
    <div className="flex h-[30px] shrink-0 items-start border-b border-[#cfcfcf]">
      <svg width="103" height="26"><path d="M33 8.5v10l-5-5zM57 8.5v10l5-5z" fill="#bbb" /></svg>
      <div className="flex h-[25px] w-[194px] shrink-0 items-center justify-center border-b-2 border-[#217346] bg-white text-[16px] font-bold tracking-[-0.560px] text-[#217346]"><span>accident_dataset_real</span></div>
      <svg width="21" height="21" className="mt-[4px] ml-[33px]" fill="none" stroke="#777"><circle cx="10.5" cy="10.5" r="9.5" /><path d="M10.5 5v11M5 10.5h11" strokeWidth="1.8" /></svg>
      <svg width="4" height="14" className="mt-[8px] ml-[160px]"><path d="M0 0h3v3H0zM0 5h3v3H0zM0 10h3v3H0z" fill="#b5b5b5" /></svg>
      <div className="mt-[5px] ml-[13px] flex h-[19px] w-[302px] bg-[#dadada]">
        <div className="flex w-[19px] items-center justify-center border border-[#c3c3c3] bg-white"><svg width="5" height="9"><path d="M5 0v9L0 4.5z" fill="#555" /></svg></div>
        <div className="w-[81px] border border-[#ababab] bg-white" /><div className="flex-1" />
        <div className="flex w-[19px] items-center justify-center border border-[#c3c3c3] bg-white"><svg width="5" height="9"><path d="M0 0v9l5-4.5z" fill="#555" /></svg></div>
      </div>
    </div>
    <div className="flex h-[26px] shrink-0 items-center border-b border-[#777] bg-[#f1f1f1] text-[13px] tracking-[-0.25px] whitespace-nowrap text-[#555]">
      <span className="w-[165px] shrink-0 pl-[7px]">Ready</span><span className="w-[144px] shrink-0">Average: 6636.250433</span><span className="w-[71px] shrink-0">Count: 26</span><span className="w-[125px] shrink-0">Sum: 172542.5113</span>
      <div className="flex h-full w-[40px] shrink-0 items-center justify-center bg-[#c9c9c9]"><svg width="14" height="13" fill="none" stroke="#666"><path d="M.5 .5h13v12H.5zM.5 4.5h13M.5 8.5h13M5 .5v12M9.5 .5v12" /></svg></div>
      <div className="flex w-[41px] shrink-0 justify-center"><svg width="14" height="14" fill="none" stroke="#666"><path d="M.5 .5h13v13H.5zM3.5 2.5h7v9h-7zM5 5h4M5 7h4M5 9h4" /></svg></div>
      <div className="flex w-[41px] shrink-0 justify-center"><svg width="14" height="14" fill="none" stroke="#666"><path d="M.5 .5h13v12H.5zM4.5 .5v8h5v-8M9.5 5v7" /></svg></div>
      <svg width="160" height="16" className="ml-[3px] shrink-0"><path d="M1 8h10" stroke="#555" strokeWidth="2.5" /><path d="M15 8.5h125" stroke="#999" /><path d="M76 1h5v14h-5z" fill="#555" /><path d="M145 8h12M151 2v12" stroke="#555" strokeWidth="2.5" /></svg>
      <span className="ml-[11px]">103%</span>
    </div>
  </div>
);

/* ---------- taskbar ---------- */
const TaskApp = ({ children, className = "w-[62.300px]", on, line = true }) => (
  <div className={"flex h-full shrink-0 flex-col items-center " + className + (on ? " bg-[#1b2c66]" : "")}>
    <div className="flex h-[47px] items-center justify-center">{children}</div>
    {line && <div className={"h-[3px] bg-[#7684b8] " + (on ? "w-full" : "w-[51px]")} />}
  </div>
);
const Office = ({ c, d, t }) => (
  <svg width="27" height="26" viewBox="0 0 27 26"><rect x="13" y="3" width="13" height="20" fill="#fff" stroke={c} /><path d={d} stroke={c} strokeWidth="1.5" /><path d="M0 3l16-3v26L0 23z" fill={c} /><text x="3" y="18.5" fontSize="14" fontWeight="700" fill="#fff" fontFamily="Open Sans, sans-serif" textLength="10" lengthAdjust="spacingAndGlyphs">{t}</text></svg>
);
const Taskbar = () => (
  <div className="flex h-[50px] shrink-0 bg-[#2d334b] font-['Open_Sans','Noto_Sans',sans-serif] text-white">
    <div className="flex w-[60px] shrink-0 items-center justify-center"><svg width="20" height="20" fill="#fff"><path d="M0 3l8.5-1.2V9.5H0zM9.5 1.6L20 0v9.5H9.5zM0 10.5h8.5v7.7L0 17zM9.5 10.5H20V20L9.5 18.4z" /></svg></div>
    <div className="flex w-[430px] shrink-0 items-center border border-[#565d7c] bg-[#343b57] pl-[13px] text-[18px] tracking-[-0.2px] text-[#d3d6e0]"><svg width="22" height="21" fill="none" stroke="#e6e6ee" strokeWidth="1.5"><circle cx="13" cy="8" r="7" /><path d="M8 13l-7 7" /></svg><span className="ml-[14px]">Type here to search</span></div>
    <div className="flex w-[60px] shrink-0 items-center justify-center"><svg width="20" height="20" fill="none" stroke="#fff" strokeWidth="3"><circle cx="10" cy="10" r="8" /></svg></div>
    <div className="flex w-[62px] shrink-0 items-center justify-center"><svg width="21" height="20" fill="none" stroke="#fff" strokeWidth="1.3"><path d="M1 0v3h12V0M1 20v-3h12v3M1 5.5h12v9H1zM18 0v6M18 12v8" /><path d="M17 7.5h3v3h-3z" fill="#fff" /></svg></div>
    <TaskApp><svg width="29" height="25"><path d="M1 2h10l2 3h15v19H1z" fill="#fcd462" /><path d="M1 2h10l2 3v2H1z" fill="#d99a1c" /><path d="M6 24V14h17v10h-5v-5h-7v5z" fill="#3f9bd8" /></svg></TaskApp>
    <TaskApp>
      <svg width="30" height="30" viewBox="0 0 30 30" className="ml-[2px]"><path d="M15 15L2.9 8A14 14 0 0127.1 8z" fill="#e0483a" /><path d="M15 15L2.9 8A14 14 0 0015 29z" fill="#2f9e55" /><path d="M15 15l12.1-7A14 14 0 0115 29z" fill="#fbc926" /><path d="M3 8l6 9 12-9z" fill="#e0483a" /><circle cx="15" cy="15" r="6.5" fill="#fff" /><circle cx="15" cy="15" r="5" fill="#3f7de8" /><circle cx="22" cy="17.5" r="4" fill="#3b2a24" /><path d="M16 30c0-11 12-11 12 0z" fill="#2a2226" /></svg>
    </TaskApp>
    <TaskApp line={false}><svg width="30" height="30" fill="none" stroke="#1b1f2e" strokeLinecap="round"><circle cx="15" cy="15" r="14.5" fill="#1fd760" stroke="none" /><path d="M7 10.5c5-1.5 11-1 16 1.5" strokeWidth="2.6" /><path d="M8 15.5c4-1.2 9-.7 13 1.3" strokeWidth="2.2" /><path d="M8.5 20c4-1 7.5-.5 11 1.2" strokeWidth="1.9" /></svg></TaskApp>
    <TaskApp on className="w-[61px]"><svg width="26" height="30" fill="none"><path d="M4 3c6-2 16-2 18 4 1 6-4 10-9 13" stroke="#d7452a" strokeWidth="4" /><path d="M12 2l1 18M8 20L15 9" stroke="#e6ecf2" strokeWidth="3.500" /><ellipse cx="5.500" cy="24" rx="4" ry="3.200" stroke="#2c93dd" strokeWidth="2.600" /><ellipse cx="16" cy="25.500" rx="3.200" ry="3.500" stroke="#2c93dd" strokeWidth="2.600" /></svg></TaskApp>
    <TaskApp line={false}><svg width="24" height="28" fill="#fff"><path d="M20.500 9V2L2 7.500v14.500l7 3.500" fill="none" stroke="#fff" strokeWidth="1.800" /><path d="M7 14l14-3.500v5.500l-8 1.500-6-1.500zM8 19l6 1v5zM15.500 20l6-1.500v6l-6-1z" /></svg></TaskApp>
    <TaskApp><Office c="#1e7145" d="M18 7h6M18 11h6M18 15h6M18 19h6" t="X" /></TaskApp>
    <TaskApp><svg width="28" height="28" viewBox="0 0 24 24"><path d="M12 1a11 11 0 107 19.5l3 3h1.5v-3l-2.5-3A11 11 0 0012 1zm0 5a6 6 0 11-.01 0z" fill="#7fa82c" fillRule="evenodd" /><path d="M11 11h4l9 9v3.5h-3z" fill="#a6cf5e" /><path d="M9.5 9.5h4l2 3-3 2z" fill="#ee7913" /></svg></TaskApp>
    <TaskApp><Office c="#2a5699" d="M17 7h8M17 10h8M17 13h8M17 16h8M17 19h8" t="W" /></TaskApp>
    <div className="flex-1" />
    <div className="flex shrink-0 items-center">
      <svg width="16" height="10" fill="none" stroke="#fff" strokeWidth="1.4"><path d="M1 9l7-7.5L15 9" /></svg>
      <svg width="21" height="21" className="ml-[12px]" fill="none" stroke="#fff" strokeWidth="1.4"><path d="M1 3l18-2v12M1 3v14l9 1" /><path d="M6 8c1-3 6-3 7 0V5M13 10c-1 3-6 3-7 0v3" /><circle cx="15.5" cy="15.5" r="4.8" fill="#fc9a1c" stroke="none" /></svg>
      <svg width="17" height="17" className="ml-[12px]" fill="none" stroke="#ccd" strokeWidth="1.3"><path d="M1 16C1 7 7 1 16 1M5 16C5 9.5 9.5 5 16 5M9 16c0-4 3-7 7-7" /><circle cx="14" cy="14.5" r="1.8" fill="#fff" stroke="none" /></svg>
      <svg width="21" height="18" className="ml-[10px]" fill="none" stroke="#fff" strokeWidth="1.3"><path d="M1 6h3l5-4.5v15L4 12H1zM12 6c1.5 2 1.5 4 0 6" /><path d="M15 4c3 3 3 7 0 10M18 2c4 4 4 10 0 14" stroke="#8c91a8" /></svg>
      <svg width="20" height="12" className="ml-[11px]" fill="none" stroke="#fff" strokeWidth="1.3"><path d="M1 1h16v10H1zM18.5 4v4" /><path d="M3 3h8v6H3z" fill="#fff" /></svg>
      <span className="ml-[15px] w-[24px] text-[15px] tracking-[-0.5px]">ไทย</span>
      <div className="ml-[7px] flex w-[86px] flex-col items-center text-[14.500px] leading-[22.500px] tracking-[-0.3px]"><span>2:15 AM</span><span>10/17/2020</span></div>
      <svg width="21" height="21" className="ml-[14px]" fill="none" stroke="#fff" strokeWidth="1.4"><path d="M1 1h19v15h-6.5l-3 4-3-4H1z" /></svg>
      <div className="ml-[26px] h-[50px] w-px bg-[#6d7390]" /><div className="w-[4px]" />
    </div>
  </div>
);

export default function App() {
  return (
    <div className="flex h-[1080px] w-[1920px] flex-col overflow-hidden bg-[#20233a]">
      <div className="h-px shrink-0 bg-[#3b3f58]" />
      <div className="flex h-[1029px] shrink-0"><Qgis /><Excel /></div>
      <Taskbar />
    </div>
  );
}
